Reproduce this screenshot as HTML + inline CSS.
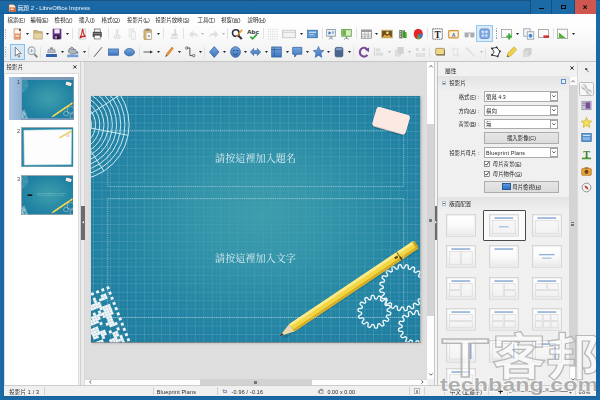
<!DOCTYPE html>
<html><head><meta charset="utf-8"><title>LibreOffice Impress</title>
<style>
html,body{margin:0;padding:0}
body{width:600px;height:400px;overflow:hidden;position:relative;background:#1a68a4;font-family:"Liberation Sans","Noto Sans CJK TC",sans-serif;font-size:5.4px;color:#222}
div,svg{position:absolute;box-sizing:border-box}
.t{opacity:.999;white-space:nowrap;height:10px;line-height:10px;font-size:5.4px;color:#262626;font-weight:400}
u{text-decoration-thickness:0.35px;text-underline-offset:0.4px;text-decoration-color:rgba(30,30,30,.5)}
.r{text-align:right}
svg{overflow:visible}
</style></head><body>
<svg width="0" height="0" style="left:0;top:0"><defs><linearGradient id="icb" x1="0" y1="0" x2="0" y2="1"><stop offset="0" stop-color="#76a6de"/><stop offset="1" stop-color="#3c74bc"/></linearGradient><linearGradient id="ltg" x1="0" y1="0" x2="0" y2="1"><stop offset="0" stop-color="#ffffff"/><stop offset=".5" stop-color="#fbfbfb"/><stop offset="1" stop-color="#ebebeb"/></linearGradient></defs></svg>
<div style="left:0;top:0;width:600px;height:400px">
<div style="left:0px;top:0px;width:600px;height:15px;background:linear-gradient(#124a78 0,#1f69a2 1.5px,#1a68a4 4px,#1867a6 12px,#155a92 14px,#13507f 15px)"></div>
<svg style="left:8px;top:3.5px;" width="8" height="8" viewBox="0 0 8 8" preserveAspectRatio="none"><path d="M1 .5h4.500l2 2v5H1z" fill="#f6f1ea" stroke="#b55a2c" stroke-width=".6"/><rect x="1.600" y="3.400" width="5.400" height="3.800" fill="#e26a2e"/><rect x="2.600" y="4.400" width="3" height="1.600" fill="#f7d3b8"/></svg>
<div class="t" style="left:17.5px;top:2.8px;color:#f4f8fb;font-size:5.85px">無題 2 - LibreOffice Impress</div>
<div style="left:530.4px;top:0px;width:22px;height:14.2px;border-left:0.7px solid #13507f;border-right:0.7px solid #13507f;background:#1b69a5"></div>
<div style="left:552.4px;top:0px;width:22.3px;height:14.2px;border-right:0.7px solid #13507f;background:#1b69a5"></div>
<div style="left:574.7px;top:0px;width:21.4px;height:14.2px;background:#d0574f"></div>
<div style="left:539.2px;top:7.7px;width:4.4px;height:1.4px;background:#0a0a0a"></div>
<div style="left:561.3px;top:4.9px;width:4.6px;height:3.8px;border:1px solid #0a0a0a;border-top-width:1.3px"></div>
<svg style="left:583px;top:4.9px;" width="4.2" height="4.2" viewBox="0 0 4.2 4.2" preserveAspectRatio="none"><path d="M.4.4l3.400 3.400M3.800.4L.4 3.800" stroke="#111" stroke-width="1.100"/></svg>
<div style="left:4px;top:14.5px;width:592px;height:381px;background:#f0f0f0"></div>
<div style="left:4px;top:14.2px;width:592px;height:12px;background:#fefefe"></div>
<div class="t" style="left:7.5px;top:14.8px;">檔案(<u>F</u>)</div>
<div class="t" style="left:30.5px;top:14.8px;">編輯(<u>E</u>)</div>
<div class="t" style="left:54.5px;top:14.8px;">檢視(<u>V</u>)</div>
<div class="t" style="left:79px;top:14.8px;">插入(<u>I</u>)</div>
<div class="t" style="left:101.5px;top:14.8px;">格式(<u>O</u>)</div>
<div class="t" style="left:127px;top:14.8px;">投影片(<u>L</u>)</div>
<div class="t" style="left:155.5px;top:14.8px;">投影片放映(<u>S</u>)</div>
<div class="t" style="left:197.5px;top:14.8px;">工具(<u>T</u>)</div>
<div class="t" style="left:221px;top:14.8px;">視窗(<u>W</u>)</div>
<div class="t" style="left:247.5px;top:14.8px;">說明(<u>H</u>)</div>
<div style="left:4px;top:26px;width:592px;height:36px;background:linear-gradient(#fdfdfd,#f8f8f8 45%,#eeeeee);border-bottom:0.7px solid #c6c6c6"></div>
<div style="left:5.2px;top:28.5px;width:0.8px;height:0.8px;background:#b5b5b5"></div>
<div style="left:5.2px;top:30.3px;width:0.8px;height:0.8px;background:#b5b5b5"></div>
<div style="left:5.2px;top:32.1px;width:0.8px;height:0.8px;background:#b5b5b5"></div>
<div style="left:5.2px;top:33.9px;width:0.8px;height:0.8px;background:#b5b5b5"></div>
<div style="left:5.2px;top:35.7px;width:0.8px;height:0.8px;background:#b5b5b5"></div>
<div style="left:5.2px;top:37.5px;width:0.8px;height:0.8px;background:#b5b5b5"></div>
<div style="left:5.2px;top:47.0px;width:0.8px;height:0.8px;background:#b5b5b5"></div>
<div style="left:5.2px;top:48.8px;width:0.8px;height:0.8px;background:#b5b5b5"></div>
<div style="left:5.2px;top:50.6px;width:0.8px;height:0.8px;background:#b5b5b5"></div>
<div style="left:5.2px;top:52.4px;width:0.8px;height:0.8px;background:#b5b5b5"></div>
<div style="left:5.2px;top:54.2px;width:0.8px;height:0.8px;background:#b5b5b5"></div>
<div style="left:5.2px;top:56.0px;width:0.8px;height:0.8px;background:#b5b5b5"></div>
<div style="left:476.2px;top:25.4px;width:16.4px;height:16.4px;background:#d9eaf9;border:0.6px solid #9ac6ec"></div>
<svg style="left:12.5px;top:27.5px" width="8.5" height="12" viewBox="0 0 12 12" preserveAspectRatio="none"><path d="M1.600 .8h6.400l2.600 2.400v8H1.600z" fill="#fbf7f2" stroke="#b07a5a" stroke-width=".8"/><rect x="2.200" y="5.400" width="7.800" height="5.400" rx=".6" fill="#e88a5c"/><rect x="3.400" y="6.800" width="5.400" height="2.200" fill="#f7d2b6"/><circle cx="9.800" cy="1.800" r="1.300" fill="#5a3018"/></svg>
<svg style="left:32.5px;top:27.5px" width="10.0" height="12" viewBox="0 0 12 12" preserveAspectRatio="none"><path d="M1 2.5h4l1 1.2h5V11H1z" fill="#cdb57f" stroke="#9a8355" stroke-width=".7"/><path d="M1.4 5.5h9.2V10.6H1.4z" fill="#e6d3a4"/></svg>
<svg style="left:52px;top:27.5px" width="10" height="12" viewBox="0 0 12 12" preserveAspectRatio="none"><rect x=".8" y=".8" width="10.4" height="10.4" rx=".8" fill="#5b2b7d"/><rect x="2.8" y="1.2" width="6.4" height="4.2" fill="#eee8f4"/><rect x="3.2" y="7.3" width="5.6" height="3.9" fill="#2b2233"/><rect x="4" y="8" width="1.6" height="2.6" fill="#d8d0e0"/></svg>
<svg style="left:77.5px;top:27.5px" width="8.5" height="12" viewBox="0 0 12 12" preserveAspectRatio="none"><path d="M1.200 .8h9.600v10.400H1.200z" fill="#f4f4f4" stroke="#bdbdbd" stroke-width=".7"/><path d="M2.600 10C4.800 7.400 6 4 6 2.200 6 1.200 7.200 1.200 7.200 2.400 7.200 5 9.200 8 10.600 8.600 8 8 4.800 8.600 2.600 10z" fill="none" stroke="#c8201c" stroke-width="1.400"/></svg>
<svg style="left:92px;top:27.5px" width="10.5" height="12" viewBox="0 0 12 12" preserveAspectRatio="none"><rect x="2.6" y="1" width="6.8" height="3.6" fill="#f4f4f4" stroke="#555" stroke-width=".7"/><rect x=".8" y="3.8" width="10.4" height="5.4" rx="1" fill="#4a4a4a"/><rect x="2.6" y="7.2" width="6.8" height="3.8" fill="#fafafa" stroke="#555" stroke-width=".6"/><rect x="1.8" y="5" width="8.4" height="1" fill="#888"/></svg>
<svg style="left:112.5px;top:27.5px" width="8.5" height="12" viewBox="0 0 12 12" preserveAspectRatio="none"><path d="M4 1l3.200 6.200M8 1L4.800 7.200" stroke="#d2d2d2" stroke-width="1" fill="none"/><circle cx="3.600" cy="9" r="1.700" fill="none" stroke="#d4d4d4" stroke-width="1"/><circle cx="8.400" cy="9" r="1.700" fill="none" stroke="#d4d4d4" stroke-width="1"/></svg>
<svg style="left:127.5px;top:27.5px" width="8.5" height="12" viewBox="0 0 12 12" preserveAspectRatio="none"><rect x="1.500" y="1" width="6" height="7.500" fill="#f3f3f3" stroke="#dadada" stroke-width=".8"/><rect x="4.500" y="3.800" width="6" height="7.400" fill="#f6f6f6" stroke="#dadada" stroke-width=".8"/></svg>
<svg style="left:143px;top:27.5px" width="9.5" height="12" viewBox="0 0 12 12" preserveAspectRatio="none"><rect x="1.200" y="1.600" width="9.600" height="9.800" rx=".8" fill="#d6b878" stroke="#a08348" stroke-width=".7"/><rect x="3.600" y=".6" width="4.800" height="2.400" rx=".6" fill="#8c8c8c"/><rect x="4.400" y="4.800" width="6" height="6.200" fill="#fbfbfb" stroke="#bbb" stroke-width=".4"/><circle cx="7.400" cy="8" r="1.300" fill="#9aa4ae"/></svg>
<svg style="left:169px;top:27.5px" width="10" height="12" viewBox="0 0 12 12" preserveAspectRatio="none"><path d="M6.5 1h2v4.6h1.6V8H2.4L4.2 5.6H6.5z" fill="#d9d9d9"/><rect x="2" y="8.6" width="8.6" height="2.4" fill="#e3e3e3"/></svg>
<svg style="left:187.5px;top:27.5px" width="11.5" height="12" viewBox="0 0 12 12" preserveAspectRatio="none"><path d="M1 6.400L5 2.600v2.200c3.600 0 5.600 1.800 6 4.600C9.600 7.800 8 7.400 5 7.600v2.400z" fill="#e0e0e0"/></svg>
<svg style="left:207.5px;top:27.5px" width="11.5" height="12" viewBox="0 0 12 12" preserveAspectRatio="none"><path d="M11 6.400L7 2.600v2.200c-3.600 0-5.600 1.800-6 4.600C2.400 7.800 4 7.400 7 7.600v2.400z" fill="#e0e0e0"/></svg>
<svg style="left:231px;top:27.5px" width="12" height="12" viewBox="0 0 12 12" preserveAspectRatio="none"><circle cx="4.8" cy="5" r="3.3" fill="#fdfdfd" stroke="#2c2c3c" stroke-width="1.6"/><path d="M7.2 7.6l3.6 3.400" stroke="#2c2c3c" stroke-width="2"/><path d="M10.600 1.200L5.400 7.800 4.400 9.600 6.400 8.600 11.600 2.200z" fill="#e8902c"/></svg>
<svg style="left:247px;top:27.5px" width="12" height="12" viewBox="0 0 12 12" preserveAspectRatio="none"><text x="0" y="6" font-size="6.2" font-weight="bold" fill="#222" font-family="Liberation Sans,sans-serif" textLength="12" lengthAdjust="spacingAndGlyphs">Abc</text><path d="M3.400 8.600l2.200 2.200 4.400-4.600" fill="none" stroke="#3aa53a" stroke-width="1.800"/></svg>
<svg style="left:267px;top:27.5px" width="11" height="12" viewBox="0 0 12 12" preserveAspectRatio="none"><rect x="1.0" y="1.0" width=".8" height=".8" fill="#b9b9b9"/><rect x="1.0" y="3.4" width=".8" height=".8" fill="#b9b9b9"/><rect x="1.0" y="5.8" width=".8" height=".8" fill="#b9b9b9"/><rect x="1.0" y="8.2" width=".8" height=".8" fill="#b9b9b9"/><rect x="1.0" y="10.6" width=".8" height=".8" fill="#b9b9b9"/><rect x="3.4" y="1.0" width=".8" height=".8" fill="#b9b9b9"/><rect x="3.4" y="3.4" width=".8" height=".8" fill="#b9b9b9"/><rect x="3.4" y="5.8" width=".8" height=".8" fill="#b9b9b9"/><rect x="3.4" y="8.2" width=".8" height=".8" fill="#b9b9b9"/><rect x="3.4" y="10.6" width=".8" height=".8" fill="#b9b9b9"/><rect x="5.8" y="1.0" width=".8" height=".8" fill="#b9b9b9"/><rect x="5.8" y="3.4" width=".8" height=".8" fill="#b9b9b9"/><rect x="5.8" y="5.8" width=".8" height=".8" fill="#b9b9b9"/><rect x="5.8" y="8.2" width=".8" height=".8" fill="#b9b9b9"/><rect x="5.8" y="10.6" width=".8" height=".8" fill="#b9b9b9"/><rect x="8.2" y="1.0" width=".8" height=".8" fill="#b9b9b9"/><rect x="8.2" y="3.4" width=".8" height=".8" fill="#b9b9b9"/><rect x="8.2" y="5.8" width=".8" height=".8" fill="#b9b9b9"/><rect x="8.2" y="8.2" width=".8" height=".8" fill="#b9b9b9"/><rect x="8.2" y="10.6" width=".8" height=".8" fill="#b9b9b9"/><rect x="10.6" y="1.0" width=".8" height=".8" fill="#b9b9b9"/><rect x="10.6" y="3.4" width=".8" height=".8" fill="#b9b9b9"/><rect x="10.6" y="5.8" width=".8" height=".8" fill="#b9b9b9"/><rect x="10.6" y="8.2" width=".8" height=".8" fill="#b9b9b9"/><rect x="10.6" y="10.6" width=".8" height=".8" fill="#b9b9b9"/></svg>
<svg style="left:282px;top:27.5px" width="14" height="12" viewBox="0 0 12 12" preserveAspectRatio="none"><rect x=".6" y="2.200" width="10.800" height="7.600" fill="#f3f3f3" stroke="#b8b8b8" stroke-width=".7"/><path d="M.6 4.400h10.800" stroke="#c4c4c4" stroke-width=".6"/></svg>
<svg style="left:307px;top:27.5px" width="11" height="12" viewBox="0 0 12 12" preserveAspectRatio="none"><rect x=".6" y="2.200" width="10.800" height="7.600" fill="#4f8fcd" stroke="#2f6aa6" stroke-width=".7"/><rect x="2" y="3.600" width="8" height="1.300" fill="#cfe2f5"/><rect x="2" y="6" width="6" height="1" fill="#a9cbee"/><rect x="2" y="7.600" width="7" height="1" fill="#8bb6e2"/></svg>
<svg style="left:326px;top:27.5px" width="10" height="12" viewBox="0 0 12 12" preserveAspectRatio="none"><rect x=".8" y="1.600" width="10.400" height="6.600" fill="#eef1f4" stroke="#7a8792" stroke-width=".8"/><path d="M3 3.200l3.600 1.800-3.600 1.800z" fill="#3a74b8"/><rect x="7" y="3.200" width="3" height="2.600" fill="#9db8d8"/><path d="M6 8.200v2.600M3.400 11.400L6 9.600l2.600 1.800" stroke="#7a8792" stroke-width=".9" fill="none"/></svg>
<svg style="left:341px;top:27.5px" width="11" height="12" viewBox="0 0 12 12" preserveAspectRatio="none"><rect x=".8" y="1.600" width="10.400" height="6.600" fill="#d6ecc2" stroke="#5a9a3a" stroke-width=".9"/><rect x="1.400" y="2.200" width="4" height="5.400" fill="#6cb24a"/><path d="M6 8.200v2.600M3.400 11.400L6 9.600l2.600 1.800" stroke="#7a8792" stroke-width=".9" fill="none"/></svg>
<svg style="left:361px;top:27.5px" width="11" height="12" viewBox="0 0 12 12" preserveAspectRatio="none"><rect x=".6" y="2" width="10.800" height="8.200" fill="#fbfbfb" stroke="#7d7d7d" stroke-width=".8"/><rect x=".6" y="2" width="10.800" height="2" fill="#9a9a9a"/><path d="M.6 6.200h10.800M.6 8.200h10.800M4.200 4v6.200M7.800 4v6.200" stroke="#8d8d8d" stroke-width=".6"/></svg>
<svg style="left:381px;top:27.5px" width="12" height="12" viewBox="0 0 12 12" preserveAspectRatio="none"><rect x=".6" y="2.200" width="10.800" height="7.600" fill="#6e4f22" stroke="#cdbd8e" stroke-width="1"/><path d="M1.400 9.200l2.600-2.800 2 1.600 1.800-1.200 2.800 2.400z" fill="#e9a93a"/><circle cx="6.400" cy="4.800" r="1.400" fill="#f7dc6a"/></svg>
<svg style="left:398px;top:27.5px" width="10" height="12" viewBox="0 0 12 12" preserveAspectRatio="none"><rect x="1.400" y="2" width="4" height="8.400" fill="#6f7f6a"/><path d="M5.400 3l5 1.200v6l-5-.6z" fill="#58a83a"/><path d="M7.400 2v8" stroke="#3a8a2a" stroke-width="1.600"/><rect x="2.200" y="3" width="1.200" height="1.200" fill="#dfe8da"/><rect x="2.200" y="5.400" width="1.200" height="1.200" fill="#dfe8da"/><rect x="2.200" y="7.800" width="1.200" height="1.200" fill="#dfe8da"/></svg>
<svg style="left:413px;top:27.5px" width="10.5" height="12" viewBox="0 0 12 12" preserveAspectRatio="none"><circle cx="6" cy="6" r="5.200" fill="#e0282a"/><path d="M6 6L11.200 6A5.200 5.200 0 0 1 8.600 10.500z" fill="#3a78c6"/><path d="M6 6L8.600 10.500A5.200 5.200 0 0 1 4.400 10.950z" fill="#4caf50"/></svg>
<svg style="left:432px;top:27.5px" width="11" height="12" viewBox="0 0 12 12" preserveAspectRatio="none"><rect x=".8" y=".8" width="10.400" height="10.400" fill="#fcfcfc" stroke="#333" stroke-width=".7" stroke-dasharray="1.6 .5"/><text x="6" y="9.600" font-size="10" font-weight="bold" text-anchor="middle" font-family="Liberation Serif,serif" fill="#1a1a1a">T</text></svg>
<svg style="left:448px;top:27.5px" width="11" height="12" viewBox="0 0 12 12" preserveAspectRatio="none"><rect x=".8" y="2.600" width="10.400" height="7.200" rx=".8" fill="#fdf3dc" stroke="#d4902a" stroke-width="1.200"/><text x="6" y="8.600" font-size="5.600" font-weight="bold" text-anchor="middle" font-family="Liberation Sans,sans-serif" fill="#3a66b0">A</text></svg>
<svg style="left:464px;top:27.5px" width="11" height="12" viewBox="0 0 12 12" preserveAspectRatio="none"><path d="M.6 4.400h4.600v3.600c0 1-1 1.600-2.300 1.600S.6 9 .6 8zM6.800 4.400h4.600v3.600c0 1-1 1.600-2.300 1.600S6.800 9 6.800 8z" fill="#a9adb2"/><path d="M5.200 5h1.600" stroke="#8a8e92" stroke-width=".9"/></svg>
<svg style="left:501px;top:27.5px" width="11.5" height="12" viewBox="0 0 12 12" preserveAspectRatio="none"><rect x=".6" y="1.400" width="10.400" height="8" fill="#fbfbfb" stroke="#9a9a9a" stroke-width=".8"/><path d="M8.600 5.600v5.800M5.700 8.500h5.800" stroke="#3fae3a" stroke-width="2.200"/></svg>
<svg style="left:522.5px;top:27.5px" width="11.5" height="12" viewBox="0 0 12 12" preserveAspectRatio="none"><rect x=".8" y=".8" width="6.600" height="7.400" fill="#f4f6f9" stroke="#8d97a3" stroke-width=".8"/><rect x="4.400" y="3.800" width="6.800" height="7.400" fill="#f4f6f9" stroke="#8d97a3" stroke-width=".8"/><circle cx="7.800" cy="7.800" r="2" fill="#4a8ad0"/></svg>
<svg style="left:538px;top:27.5px" width="11.5" height="12" viewBox="0 0 12 12" preserveAspectRatio="none"><rect x=".6" y="1.400" width="10.400" height="8" fill="#fbfbfb" stroke="#9a9a9a" stroke-width=".8"/><rect x="5.600" y="7.400" width="6" height="2.400" fill="#d92a2a"/></svg>
<svg style="left:557px;top:27.5px" width="11" height="12" viewBox="0 0 12 12" preserveAspectRatio="none"><rect x=".6" y="1.200" width="10.800" height="9.400" fill="#fbfbfb" stroke="#9a9a9a" stroke-width=".8"/><path d="M2 10V4.400L9.600 10z" fill="#58b03a"/></svg>
<svg style="left:479.2px;top:28.099999999999998px" width="11.199999999999989" height="11.4" viewBox="0 0 12 12" preserveAspectRatio="none"><rect x="1" y="1" width="10" height="10" rx="1.800" fill="#86aee2" stroke="#5584c8" stroke-width=".9"/><rect x="3" y="3" width="2.200" height="2.200" rx=".5" fill="#dfeaf8"/><rect x="6.800" y="3" width="2.200" height="2.200" rx=".5" fill="#dfeaf8"/><rect x="3" y="6.800" width="2.200" height="2.200" rx=".5" fill="#dfeaf8"/><rect x="6.800" y="6.800" width="2.200" height="2.200" rx=".5" fill="#dfeaf8"/></svg>
<svg style="left:25.5px;top:32.8px" width="3" height="2" viewBox="0 0 3 2"><path d="M0 0h3L1.5 2z" fill="#222"/></svg>
<svg style="left:45.5px;top:32.8px" width="3" height="2" viewBox="0 0 3 2"><path d="M0 0h3L1.5 2z" fill="#222"/></svg>
<svg style="left:66.0px;top:32.8px" width="3" height="2" viewBox="0 0 3 2"><path d="M0 0h3L1.5 2z" fill="#222"/></svg>
<svg style="left:157.0px;top:32.8px" width="3" height="2" viewBox="0 0 3 2"><path d="M0 0h3L1.5 2z" fill="#222"/></svg>
<svg style="left:200.5px;top:32.8px" width="3" height="2" viewBox="0 0 3 2"><path d="M0 0h3L1.5 2z" fill="#b9b9b9"/></svg>
<svg style="left:221.5px;top:32.8px" width="3" height="2" viewBox="0 0 3 2"><path d="M0 0h3L1.5 2z" fill="#b9b9b9"/></svg>
<svg style="left:299.5px;top:32.8px" width="3" height="2" viewBox="0 0 3 2"><path d="M0 0h3L1.5 2z" fill="#222"/></svg>
<svg style="left:374.5px;top:32.8px" width="3" height="2" viewBox="0 0 3 2"><path d="M0 0h3L1.5 2z" fill="#222"/></svg>
<svg style="left:516.0px;top:32.8px" width="3" height="2" viewBox="0 0 3 2"><path d="M0 0h3L1.5 2z" fill="#222"/></svg>
<svg style="left:571.5px;top:32.8px" width="3" height="2" viewBox="0 0 3 2"><path d="M0 0h3L1.5 2z" fill="#222"/></svg>
<div style="left:72.25px;top:28.0px;width:0.6px;height:11px;background:#e2e3e4"></div>
<div style="left:107.75px;top:28.0px;width:0.6px;height:11px;background:#e2e3e4"></div>
<div style="left:162.75px;top:28.0px;width:0.6px;height:11px;background:#e2e3e4"></div>
<div style="left:182.75px;top:28.0px;width:0.6px;height:11px;background:#e2e3e4"></div>
<div style="left:227.25px;top:28.0px;width:0.6px;height:11px;background:#e2e3e4"></div>
<div style="left:262.75px;top:28.0px;width:0.6px;height:11px;background:#e2e3e4"></div>
<div style="left:321.75px;top:28.0px;width:0.6px;height:11px;background:#e2e3e4"></div>
<div style="left:355.75px;top:28.0px;width:0.6px;height:11px;background:#e2e3e4"></div>
<div style="left:427.25px;top:28.0px;width:0.6px;height:11px;background:#e2e3e4"></div>
<div style="left:552.75px;top:28.0px;width:0.6px;height:11px;background:#e2e3e4"></div>
<div style="left:495.8px;top:28.0px;width:0.7px;height:0.9px;background:#999"></div>
<div style="left:495.8px;top:29.7px;width:0.7px;height:0.9px;background:#999"></div>
<div style="left:495.8px;top:31.4px;width:0.7px;height:0.9px;background:#999"></div>
<div style="left:495.8px;top:33.1px;width:0.7px;height:0.9px;background:#999"></div>
<div style="left:495.8px;top:34.8px;width:0.7px;height:0.9px;background:#999"></div>
<div style="left:495.8px;top:36.5px;width:0.7px;height:0.9px;background:#999"></div>
<div style="left:495.8px;top:38.2px;width:0.7px;height:0.9px;background:#999"></div>
<div style="left:9.5px;top:44px;width:15.6px;height:16.4px;background:#d6e8f8;border:0.6px solid #8abde8"></div>
<svg style="left:12px;top:46.0px" width="11" height="12" viewBox="0 0 12 12" preserveAspectRatio="none"><path d="M3.600 1.200v9l2.200-2.200 1.500 3.200 1.300-.6-1.500-3.100h3z" fill="#fdfdfd" stroke="#3a3a3a" stroke-width=".6"/></svg>
<svg style="left:27px;top:46.0px" width="11" height="12" viewBox="0 0 12 12" preserveAspectRatio="none"><circle cx="5" cy="4.800" r="3.900" fill="#e9f0f7" stroke="#a2aab2" stroke-width="1.200"/><path d="M7.900 7.900l3.300 3.300" stroke="#7d848b" stroke-width="2"/><path d="M3.200 4.800h3.600M5 3v3.600" stroke="#9aa2aa" stroke-width=".8"/></svg>
<svg style="left:45px;top:46.0px" width="13" height="12" viewBox="0 0 12 12" preserveAspectRatio="none"><rect x="1" y="8" width="10" height="3" fill="#2f62ae"/><path d="M2.400 6.600h7.200L9 3.400H3z" fill="#b8bcc2" stroke="#80858c" stroke-width=".6"/><rect x="4.600" y="1.400" width="2.800" height="2" fill="#8f959c"/></svg>
<svg style="left:66px;top:46.0px" width="13.5" height="12" viewBox="0 0 12 12" preserveAspectRatio="none"><rect x="1" y="8.600" width="10" height="2.600" fill="#6fa0d8"/><path d="M3 2.400l5.400 1.200 1.200 3.600-4.600 1.200L2 6z" fill="#aeb4bb" stroke="#6f767e" stroke-width=".7"/><path d="M9.600 4.400c1.200 1.200 1.600 2.400 1.200 3.600-.8-.6-1.200-1.800-1.200-3.600z" fill="#3f78c2"/><path d="M4 1.200c2 0 3 1 3.200 2.600" fill="none" stroke="#555" stroke-width=".7"/></svg>
<svg style="left:93px;top:46.0px" width="10" height="12" viewBox="0 0 12 12" preserveAspectRatio="none"><path d="M1.200 10.800L10.800 1.200" stroke="#3c3c3c" stroke-width=".9"/></svg>
<svg style="left:108px;top:46.0px" width="11" height="12" viewBox="0 0 12 12" preserveAspectRatio="none"><rect x=".6" y="3" width="10.800" height="6.200" fill="url(#icb)" stroke="#2f62a2" stroke-width=".8"/></svg>
<svg style="left:124px;top:46.0px" width="11" height="12" viewBox="0 0 12 12" preserveAspectRatio="none"><ellipse cx="6" cy="6.200" rx="5.400" ry="3.700" fill="url(#icb)" stroke="#2f62a2" stroke-width=".8"/></svg>
<svg style="left:142.5px;top:46.0px" width="10.5" height="12" viewBox="0 0 12 12" preserveAspectRatio="none"><path d="M.6 6h8" stroke="#2a2a2a" stroke-width=".8"/><path d="M8 4.400L11.400 6 8 7.600z" fill="#2a2a2a"/></svg>
<svg style="left:164px;top:46.0px" width="10" height="12" viewBox="0 0 12 12" preserveAspectRatio="none"><path d="M9.600 1l1.600 1.600-6.600 6.800L2 10.600l1-2.800z" fill="#e8953a" stroke="#a8641c" stroke-width=".5"/><path d="M2 10.600l.6-1.600 1 1z" fill="#333"/></svg>
<svg style="left:184.5px;top:46.0px" width="10.5" height="12" viewBox="0 0 12 12" preserveAspectRatio="none"><path d="M2 2h3.600v7.600H10" fill="none" stroke="#3a3a3a" stroke-width=".9"/><circle cx="2" cy="2" r="1.300" fill="#fff" stroke="#333" stroke-width=".7"/><circle cx="10" cy="9.600" r="1.300" fill="#fff" stroke="#333" stroke-width=".7"/></svg>
<svg style="left:209px;top:46.0px" width="10.5" height="12" viewBox="0 0 12 12" preserveAspectRatio="none"><path d="M6 .6L11.400 6 6 11.400.6 6z" fill="url(#icb)" stroke="#2c5c98" stroke-width=".8"/></svg>
<svg style="left:229.5px;top:46.0px" width="11.0" height="12" viewBox="0 0 12 12" preserveAspectRatio="none"><circle cx="6" cy="6" r="5.300" fill="url(#icb)" stroke="#2c5c98" stroke-width=".8"/><circle cx="4.200" cy="4.600" r=".8" fill="#1d3f70"/><circle cx="7.800" cy="4.600" r=".8" fill="#1d3f70"/><path d="M3.400 7.400c1.400 1.800 3.800 1.800 5.200 0" fill="none" stroke="#1d3f70" stroke-width=".8"/></svg>
<svg style="left:250px;top:46.0px" width="11" height="12" viewBox="0 0 12 12" preserveAspectRatio="none"><path d="M.4 6L4 2.400v2.200h4V2.400L11.600 6 8 9.600V7.400H4v2.200z" fill="url(#icb)" stroke="#2c5c98" stroke-width=".6"/></svg>
<svg style="left:271px;top:46.0px" width="11" height="12" viewBox="0 0 12 12" preserveAspectRatio="none"><rect x=".8" y="1" width="10.400" height="10" fill="url(#icb)" stroke="#2c5c98" stroke-width=".8"/><path d="M.8 3.600h10.400M3.600 1v10" stroke="#2c5c98" stroke-width=".7"/></svg>
<svg style="left:292px;top:46.0px" width="10.5" height="12" viewBox="0 0 12 12" preserveAspectRatio="none"><path d="M.8 1.400h10.400v6.800H5.600L3 11V8.200H.8z" fill="url(#icb)" stroke="#2c5c98" stroke-width=".8"/></svg>
<svg style="left:312.5px;top:46.0px" width="11.0" height="12" viewBox="0 0 12 12" preserveAspectRatio="none"><path d="M6 .4l1.700 3.800 4.100.4-3.100 2.700.9 4.100L6 9.200 2.400 11.400l.9-4.100L.2 4.600l4.100-.4z" fill="url(#icb)" stroke="#2c5c98" stroke-width=".6"/></svg>
<svg style="left:334px;top:46.0px" width="10" height="12" viewBox="0 0 12 12" preserveAspectRatio="none"><rect x="1.400" y="1.400" width="9.200" height="9.400" rx="1.600" fill="#48668e" stroke="#2c4464" stroke-width=".7"/><rect x="2.200" y="2" width="7.600" height="2.200" rx="1" fill="#7f9cc0"/></svg>
<svg style="left:357.5px;top:46.0px" width="11.5" height="12" viewBox="0 0 12 12" preserveAspectRatio="none"><path d="M9.800 8.800A4.400 4.400 0 1 1 9.400 3" fill="none" stroke="#7a4a9a" stroke-width="2.200"/><path d="M7.200 3.600L11.600 1.400l-.2 4.800z" fill="#7a4a9a"/></svg>
<svg style="left:373px;top:46.0px" width="11" height="12" viewBox="0 0 12 12" preserveAspectRatio="none"><rect x="1" y="1.400" width="1.200" height="9.200" fill="#d8d8d8"/><rect x="3" y="2.400" width="5" height="3" fill="#dcdcdc"/><rect x="3" y="6.600" width="8" height="3" fill="#dcdcdc"/></svg>
<svg style="left:394px;top:46.0px" width="10.5" height="12" viewBox="0 0 12 12" preserveAspectRatio="none"><rect x="1" y="3.600" width="7" height="7" fill="#dedede"/><rect x="4" y="1" width="7" height="7" fill="#d2d2d2"/></svg>
<svg style="left:414.5px;top:46.0px" width="11.0" height="12" viewBox="0 0 12 12" preserveAspectRatio="none"><rect x="1" y="2" width="3" height="3" fill="#dadada"/><rect x="8" y="2" width="3" height="3" fill="#dadada"/><rect x="1" y="7" width="3" height="4" fill="#dedede"/><rect x="4.600" y="7" width="3" height="4" fill="#dedede"/><rect x="8" y="7" width="3" height="4" fill="#dedede"/></svg>
<svg style="left:434.5px;top:46.0px" width="10.5" height="12" viewBox="0 0 12 12" preserveAspectRatio="none"><rect x="1.600" y="3.400" width="9.800" height="6.200" rx=".6" fill="#6a6250"/><rect x=".8" y="2.400" width="9.800" height="6.200" rx=".6" fill="#f0d88a" stroke="#8a7434" stroke-width=".7"/></svg>
<svg style="left:451px;top:46.0px" width="9" height="12" viewBox="0 0 12 12" preserveAspectRatio="none"><path d="M3 .8v8.200h8.200M.8 3h8.200v8.200" fill="none" stroke="#e0e0e0" stroke-width="1.100"/></svg>
<svg style="left:465px;top:46.0px" width="11" height="12" viewBox="0 0 12 12" preserveAspectRatio="none"><path d="M1.400 1.400l9.200 9.200" stroke="#dcdcdc" stroke-width="1.400"/><path d="M2 1l.6 1.400L4 3l-1.400.6L2 5l-.6-1.400L0 3l1.400-.6z" fill="#e0e0e0"/></svg>
<svg style="left:489.5px;top:46.0px" width="11.5" height="12" viewBox="0 0 12 12" preserveAspectRatio="none"><path d="M2 2.400l5-1 3.400 4-2.400 5-6-1.400 2.400-3z" fill="#fdfdfd" stroke="#222" stroke-width=".9"/><rect x="1.200" y="1.600" width="1.600" height="1.600" fill="#222"/><rect x="6.200" y=".6" width="1.600" height="1.600" fill="#222"/><rect x="9.600" y="4.600" width="1.600" height="1.600" fill="#222"/><rect x="7.200" y="9.600" width="1.600" height="1.600" fill="#222"/><rect x="1.200" y="8.200" width="1.600" height="1.600" fill="#222"/></svg>
<svg style="left:506px;top:46.0px" width="11.5" height="12" viewBox="0 0 12 12" preserveAspectRatio="none"><path d="M8.400.8l2.800 2.800-6.400 6.400-3.600 1 .8-3.800z" fill="#f0d24a" stroke="#b89a22" stroke-width=".6"/><path d="M1.200 11l.5-2 1.500 1.500z" fill="#444"/></svg>
<svg style="left:522px;top:46.0px" width="10.5" height="12" viewBox="0 0 12 12" preserveAspectRatio="none"><path d="M1 5h6v6H1z" fill="#dcdcdc"/><path d="M1 5l3-3h7l-4 3zM7 5l4-3v6l-4 3z" fill="#d0d0d0"/></svg>
<svg style="left:60.5px;top:51.3px" width="3" height="2" viewBox="0 0 3 2"><path d="M0 0h3L1.5 2z" fill="#222"/></svg>
<svg style="left:82.5px;top:51.3px" width="3" height="2" viewBox="0 0 3 2"><path d="M0 0h3L1.5 2z" fill="#222"/></svg>
<svg style="left:157.0px;top:51.3px" width="3" height="2" viewBox="0 0 3 2"><path d="M0 0h3L1.5 2z" fill="#222"/></svg>
<svg style="left:178.0px;top:51.3px" width="3" height="2" viewBox="0 0 3 2"><path d="M0 0h3L1.5 2z" fill="#222"/></svg>
<svg style="left:198.5px;top:51.3px" width="3" height="2" viewBox="0 0 3 2"><path d="M0 0h3L1.5 2z" fill="#222"/></svg>
<svg style="left:223.0px;top:51.3px" width="3" height="2" viewBox="0 0 3 2"><path d="M0 0h3L1.5 2z" fill="#222"/></svg>
<svg style="left:244.0px;top:51.3px" width="3" height="2" viewBox="0 0 3 2"><path d="M0 0h3L1.5 2z" fill="#222"/></svg>
<svg style="left:264.5px;top:51.3px" width="3" height="2" viewBox="0 0 3 2"><path d="M0 0h3L1.5 2z" fill="#222"/></svg>
<svg style="left:285.5px;top:51.3px" width="3" height="2" viewBox="0 0 3 2"><path d="M0 0h3L1.5 2z" fill="#222"/></svg>
<svg style="left:306.0px;top:51.3px" width="3" height="2" viewBox="0 0 3 2"><path d="M0 0h3L1.5 2z" fill="#222"/></svg>
<svg style="left:326.5px;top:51.3px" width="3" height="2" viewBox="0 0 3 2"><path d="M0 0h3L1.5 2z" fill="#222"/></svg>
<svg style="left:347.5px;top:51.3px" width="3" height="2" viewBox="0 0 3 2"><path d="M0 0h3L1.5 2z" fill="#222"/></svg>
<svg style="left:387.5px;top:51.3px" width="3" height="2" viewBox="0 0 3 2"><path d="M0 0h3L1.5 2z" fill="#b9b9b9"/></svg>
<svg style="left:408.0px;top:51.3px" width="3" height="2" viewBox="0 0 3 2"><path d="M0 0h3L1.5 2z" fill="#b9b9b9"/></svg>
<svg style="left:479.5px;top:51.3px" width="3" height="2" viewBox="0 0 3 2"><path d="M0 0h3L1.5 2z" fill="#b9b9b9"/></svg>
<div style="left:40.25px;top:46.5px;width:0.6px;height:11px;background:#e2e3e4"></div>
<div style="left:87.75px;top:46.5px;width:0.6px;height:11px;background:#e2e3e4"></div>
<div style="left:138.75px;top:46.5px;width:0.6px;height:11px;background:#e2e3e4"></div>
<div style="left:203.75px;top:46.5px;width:0.6px;height:11px;background:#e2e3e4"></div>
<div style="left:352.75px;top:46.5px;width:0.6px;height:11px;background:#e2e3e4"></div>
<div style="left:429.25px;top:46.5px;width:0.6px;height:11px;background:#e2e3e4"></div>
<div style="left:484.75px;top:46.5px;width:0.6px;height:11px;background:#e2e3e4"></div>
<div style="left:4px;top:62px;width:76px;height:11px;background:#f0f0f0"></div>
<div class="t" style="left:6.5px;top:62.3px;font-size:5.6px">投影片</div>
<svg style="left:72.8px;top:65.2px;" width="3.8" height="3.8" viewBox="0 0 3.8 3.8" preserveAspectRatio="none"><path d="M.3.3l3.200 3.200M3.500.3L.3 3.500" stroke="#222" stroke-width=".9"/></svg>
<div style="left:4.3px;top:72.7px;width:75.2px;height:312.3px;background:#fff;border:0.5px solid #dcdcdc;border-bottom:0"></div>
<div style="left:80px;top:62px;width:5px;height:322.5px;background:#ececec;border-left:0.5px solid #d0d0d0;border-right:0.5px solid #d8d8d8"></div>
<div style="left:81.4px;top:206px;width:3.2px;height:34px;background:#6b6b6b"></div>
<svg style="left:82px;top:221px;" width="2" height="2.4" viewBox="0 0 2 2.4" preserveAspectRatio="none"><path d="M2 0v2.400L.2 1.200z" fill="#fff"/></svg>
<div style="left:9.3px;top:77.2px;width:65.2px;height:43px;background:linear-gradient(90deg,#a9c4e2 0,#93b2d4 18%,#7f9cba 20%,#7b98b6 100%)"></div>
<div style="left:85px;top:62px;width:342px;height:316.5px;background:#dedede"></div>
<div style="left:92.2px;top:97.3px;width:328.79999999999995px;height:246.10000000000002px;background:rgba(0,0,0,.22);filter:blur(1.8px)"></div>
<div style="left:91.39999999999999px;top:341.5px;width:329.4px;height:1.6px;background:rgba(60,60,60,.45);filter:blur(.5px)"></div>
<svg style="left:90.8px;top:95.7px;" width="329.4" height="246.3" viewBox="0 0 330 247.5" preserveAspectRatio="none"><defs><radialGradient id="mg" cx="52%" cy="48%" r="72%"><stop offset="0" stop-color="#3e9dac"/><stop offset="0.25" stop-color="#3495aa"/><stop offset="0.5" stop-color="#288aa4"/><stop offset="0.71" stop-color="#2081a3"/><stop offset="0.9" stop-color="#1f7e9f"/><stop offset="1" stop-color="#1c799d"/></radialGradient><radialGradient id="mh" cx="52%" cy="48%" r="72%"><stop offset="0" stop-color="#3e9dac" stop-opacity="0.85"/><stop offset="0.25" stop-color="#3495aa" stop-opacity="0.6"/><stop offset="0.5" stop-color="#288aa4" stop-opacity="0.3"/><stop offset="0.71" stop-color="#2081a3" stop-opacity="0.08"/><stop offset="0.9" stop-color="#1f7e9f" stop-opacity="0"/><stop offset="1" stop-color="#1c799d" stop-opacity="0"/></radialGradient><pattern id="mp1" width="4.25" height="4.25" patternUnits="userSpaceOnUse" x="2" y="1.2"><path d="M0 0H4.250M0 0V4.250" stroke="#fff" stroke-opacity=".13" stroke-width=".45"/></pattern><pattern id="mp2" width="8.5" height="8.5" patternUnits="userSpaceOnUse" x="2" y="1.2"><path d="M0 0H8.500M0 0V8.500" stroke="#fff" stroke-opacity=".31" stroke-width=".6"/></pattern><clipPath id="mc"><rect width="330.0" height="247.5"/></clipPath></defs><g clip-path="url(#mc)"><rect width="330.0" height="247.5" fill="url(#mg)"/><rect width="330.0" height="247.5" fill="url(#mp1)"/><rect width="330.0" height="247.5" fill="url(#mp2)"/><rect width="330.0" height="247.5" fill="url(#mh)"/><g fill="none" stroke="#d4f3fb" stroke-opacity="0.92" stroke-width="1.0"><circle cx="-17.3" cy="28.9" r="17.7"/><circle cx="-17.3" cy="28.9" r="21.9"/><circle cx="-17.3" cy="28.9" r="26.1"/><circle cx="-17.3" cy="28.9" r="30.3"/><circle cx="-17.3" cy="28.9" r="34.5"/><circle cx="-17.3" cy="28.9" r="38.7"/><circle cx="-17.3" cy="28.9" r="42.9"/><circle cx="-17.3" cy="28.9" r="47.1"/><circle cx="-17.3" cy="28.9" r="51.3"/><circle cx="-17.3" cy="28.9" r="55.5"/><path d="M-2.46 19.26L29.25 -1.33"/><path d="M0.07 32.28L37.18 39.49"/><path d="M-7.66 43.74L12.93 75.45"/></g><g transform="translate(17.8 191) rotate(-21.4)" fill="#f2f6f8"><rect x="-36.40" y="0.00" width="2.85" height="2.85"/><rect x="-30.80" y="0.00" width="2.85" height="2.85"/><rect x="-25.20" y="0.00" width="2.85" height="2.85"/><rect x="-19.60" y="0.00" width="2.85" height="2.85"/><rect x="-14.00" y="0.00" width="2.85" height="2.85"/><rect x="-8.40" y="0.00" width="2.85" height="2.85"/><rect x="-2.80" y="0.00" width="2.85" height="2.85"/><rect x="-33.60" y="5.60" width="2.85" height="2.85"/><rect x="-30.80" y="5.60" width="2.85" height="2.85"/><rect x="-28.00" y="5.60" width="2.85" height="2.85"/><rect x="-19.60" y="5.60" width="2.85" height="2.85"/><rect x="-11.20" y="5.60" width="2.85" height="2.85"/><rect x="-8.40" y="5.60" width="2.85" height="2.85"/><rect x="-2.80" y="5.60" width="2.85" height="2.85"/><rect x="-33.60" y="8.40" width="2.85" height="2.85"/><rect x="-30.80" y="8.40" width="2.85" height="2.85"/><rect x="-28.00" y="8.40" width="2.85" height="2.85"/><rect x="-19.60" y="8.40" width="2.85" height="2.85"/><rect x="-14.00" y="8.40" width="2.85" height="2.85"/><rect x="-11.20" y="8.40" width="2.85" height="2.85"/><rect x="-8.40" y="8.40" width="2.85" height="2.85"/><rect x="-36.40" y="11.20" width="2.85" height="2.85"/><rect x="-33.60" y="11.20" width="2.85" height="2.85"/><rect x="-30.80" y="11.20" width="2.85" height="2.85"/><rect x="-28.00" y="11.20" width="2.85" height="2.85"/><rect x="-25.20" y="11.20" width="2.85" height="2.85"/><rect x="-22.40" y="11.20" width="2.85" height="2.85"/><rect x="-19.60" y="11.20" width="2.85" height="2.85"/><rect x="-16.80" y="11.20" width="2.85" height="2.85"/><rect x="-2.80" y="11.20" width="2.85" height="2.85"/><rect x="-36.40" y="14.00" width="2.85" height="2.85"/><rect x="-33.60" y="14.00" width="2.85" height="2.85"/><rect x="-30.80" y="14.00" width="2.85" height="2.85"/><rect x="-28.00" y="14.00" width="2.85" height="2.85"/><rect x="-25.20" y="14.00" width="2.85" height="2.85"/><rect x="-22.40" y="14.00" width="2.85" height="2.85"/><rect x="-19.60" y="14.00" width="2.85" height="2.85"/><rect x="-16.80" y="14.00" width="2.85" height="2.85"/><rect x="-16.80" y="16.80" width="2.85" height="2.85"/><rect x="-14.00" y="16.80" width="2.85" height="2.85"/><rect x="-11.20" y="16.80" width="2.85" height="2.85"/><rect x="-8.40" y="16.80" width="2.85" height="2.85"/><rect x="-2.80" y="16.80" width="2.85" height="2.85"/><rect x="-25.20" y="19.60" width="2.85" height="2.85"/><rect x="-19.60" y="19.60" width="2.85" height="2.85"/><rect x="-14.00" y="19.60" width="2.85" height="2.85"/><rect x="-11.20" y="19.60" width="2.85" height="2.85"/><rect x="-8.40" y="19.60" width="2.85" height="2.85"/><rect x="-33.60" y="22.40" width="2.85" height="2.85"/><rect x="-28.00" y="22.40" width="2.85" height="2.85"/><rect x="-25.20" y="22.40" width="2.85" height="2.85"/><rect x="-22.40" y="22.40" width="2.85" height="2.85"/><rect x="-19.60" y="22.40" width="2.85" height="2.85"/><rect x="-16.80" y="22.40" width="2.85" height="2.85"/><rect x="-14.00" y="22.40" width="2.85" height="2.85"/><rect x="-11.20" y="22.40" width="2.85" height="2.85"/><rect x="-8.40" y="22.40" width="2.85" height="2.85"/><rect x="-2.80" y="22.40" width="2.85" height="2.85"/><rect x="-36.40" y="25.20" width="2.85" height="2.85"/><rect x="-33.60" y="25.20" width="2.85" height="2.85"/><rect x="-30.80" y="25.20" width="2.85" height="2.85"/><rect x="-28.00" y="25.20" width="2.85" height="2.85"/><rect x="-25.20" y="25.20" width="2.85" height="2.85"/><rect x="-22.40" y="25.20" width="2.85" height="2.85"/><rect x="-16.80" y="25.20" width="2.85" height="2.85"/><rect x="-14.00" y="25.20" width="2.85" height="2.85"/><rect x="-11.20" y="25.20" width="2.85" height="2.85"/><rect x="-8.40" y="25.20" width="2.85" height="2.85"/><rect x="-33.60" y="28.00" width="2.85" height="2.85"/><rect x="-30.80" y="28.00" width="2.85" height="2.85"/><rect x="-28.00" y="28.00" width="2.85" height="2.85"/><rect x="-25.20" y="28.00" width="2.85" height="2.85"/><rect x="-14.00" y="28.00" width="2.85" height="2.85"/><rect x="-11.20" y="28.00" width="2.85" height="2.85"/><rect x="-2.80" y="28.00" width="2.85" height="2.85"/><rect x="-36.40" y="30.80" width="2.85" height="2.85"/><rect x="-22.40" y="30.80" width="2.85" height="2.85"/><rect x="-14.00" y="30.80" width="2.85" height="2.85"/><rect x="-11.20" y="30.80" width="2.85" height="2.85"/><rect x="-36.40" y="33.60" width="2.85" height="2.85"/><rect x="-33.60" y="33.60" width="2.85" height="2.85"/><rect x="-30.80" y="33.60" width="2.85" height="2.85"/><rect x="-28.00" y="33.60" width="2.85" height="2.85"/><rect x="-16.80" y="33.60" width="2.85" height="2.85"/><rect x="-14.00" y="33.60" width="2.85" height="2.85"/><rect x="-11.20" y="33.60" width="2.85" height="2.85"/><rect x="-2.80" y="33.60" width="2.85" height="2.85"/><rect x="-36.40" y="36.40" width="2.85" height="2.85"/><rect x="-33.60" y="36.40" width="2.85" height="2.85"/><rect x="-30.80" y="36.40" width="2.85" height="2.85"/><rect x="-28.00" y="36.40" width="2.85" height="2.85"/><rect x="-14.00" y="36.40" width="2.85" height="2.85"/><rect x="-11.20" y="36.40" width="2.85" height="2.85"/><rect x="-8.40" y="36.40" width="2.85" height="2.85"/><rect x="-33.60" y="39.20" width="2.85" height="2.85"/><rect x="-30.80" y="39.20" width="2.85" height="2.85"/><rect x="-28.00" y="39.20" width="2.85" height="2.85"/><rect x="-25.20" y="39.20" width="2.85" height="2.85"/><rect x="-22.40" y="39.20" width="2.85" height="2.85"/><rect x="-2.80" y="39.20" width="2.85" height="2.85"/><rect x="-33.60" y="42.00" width="2.85" height="2.85"/><rect x="-30.80" y="42.00" width="2.85" height="2.85"/><rect x="-25.20" y="42.00" width="2.85" height="2.85"/><rect x="-22.40" y="42.00" width="2.85" height="2.85"/><rect x="-16.80" y="42.00" width="2.85" height="2.85"/><rect x="-8.40" y="42.00" width="2.85" height="2.85"/><rect x="-25.20" y="44.80" width="2.85" height="2.85"/><rect x="-14.00" y="44.80" width="2.85" height="2.85"/><rect x="-11.20" y="44.80" width="2.85" height="2.85"/><rect x="-2.80" y="44.80" width="2.85" height="2.85"/><rect x="-33.60" y="47.60" width="2.85" height="2.85"/><rect x="-30.80" y="47.60" width="2.85" height="2.85"/><rect x="-28.00" y="47.60" width="2.85" height="2.85"/><rect x="-14.00" y="47.60" width="2.85" height="2.85"/><rect x="-11.20" y="47.60" width="2.85" height="2.85"/><rect x="-30.80" y="50.40" width="2.85" height="2.85"/><rect x="-28.00" y="50.40" width="2.85" height="2.85"/><rect x="-19.60" y="50.40" width="2.85" height="2.85"/><rect x="-16.80" y="50.40" width="2.85" height="2.85"/><rect x="-14.00" y="50.40" width="2.85" height="2.85"/><rect x="-8.40" y="50.40" width="2.85" height="2.85"/><rect x="-2.80" y="50.40" width="2.85" height="2.85"/><rect x="-36.40" y="53.20" width="2.85" height="2.85"/><rect x="-30.80" y="53.20" width="2.85" height="2.85"/><rect x="-28.00" y="53.20" width="2.85" height="2.85"/><rect x="-25.20" y="53.20" width="2.85" height="2.85"/><rect x="-19.60" y="53.20" width="2.85" height="2.85"/><rect x="-16.80" y="53.20" width="2.85" height="2.85"/><rect x="-14.00" y="53.20" width="2.85" height="2.85"/><rect x="-11.20" y="53.20" width="2.85" height="2.85"/><rect x="-8.40" y="53.20" width="2.85" height="2.85"/><rect x="-36.40" y="56.00" width="2.85" height="2.85"/><rect x="-30.80" y="56.00" width="2.85" height="2.85"/><rect x="-25.20" y="56.00" width="2.85" height="2.85"/><rect x="-19.60" y="56.00" width="2.85" height="2.85"/><rect x="-14.00" y="56.00" width="2.85" height="2.85"/><rect x="-8.40" y="56.00" width="2.85" height="2.85"/><rect x="-2.80" y="56.00" width="2.85" height="2.85"/></g><g fill="none" stroke="#f4fbfd" stroke-width="1.3" stroke-linejoin="round"><path d="M333.69 194.74 L334.88 195.30 L335.38 195.82 L335.31 196.27 L335.23 196.72 L335.15 197.17 L335.05 197.61 L334.40 197.93 L333.10 198.04 L331.79 198.11 L331.15 198.32 L331.03 198.69 L330.91 199.06 L330.78 199.42 L330.64 199.78 L331.01 200.35 L331.99 201.21 L332.94 202.12 L333.26 202.76 L333.05 203.17 L332.84 203.57 L332.62 203.97 L332.39 204.37 L331.68 204.46 L330.40 204.17 L329.14 203.83 L328.46 203.84 L328.24 204.15 L328.01 204.46 L327.77 204.76 L327.53 205.06 L327.71 205.72 L328.37 206.84 L329.00 208.00 L329.09 208.71 L328.77 209.03 L328.45 209.35 L328.12 209.66 L327.78 209.97 L327.07 209.84 L325.95 209.17 L324.85 208.45 L324.20 208.25 L323.89 208.48 L323.58 208.70 L323.26 208.92 L322.94 209.13 L322.90 209.81 L323.19 211.08 L323.43 212.37 L323.30 213.08 L322.89 213.29 L322.49 213.49 L322.07 213.69 L321.66 213.87 L321.03 213.53 L320.16 212.54 L319.34 211.53 L318.79 211.13 L318.42 211.25 L318.06 211.37 L317.69 211.47 L317.31 211.57 L317.07 212.21 L316.95 213.51 L316.78 214.81 L316.44 215.45 L315.99 215.52 L315.54 215.59 L315.08 215.64 L314.63 215.69 L314.14 215.17 L313.62 213.97 L313.15 212.75 L312.75 212.20 L312.36 212.20 L311.98 212.20 L311.59 212.18 L311.21 212.16 L310.78 212.70 L310.26 213.89 L309.70 215.08 L309.18 215.58 L308.73 215.51 L308.28 215.43 L307.83 215.35 L307.39 215.25 L307.07 214.60 L306.96 213.30 L306.89 211.99 L306.68 211.35 L306.31 211.23 L305.94 211.11 L305.58 210.98 L305.22 210.84 L304.65 211.21 L303.79 212.19 L302.88 213.14 L302.24 213.46 L301.83 213.25 L301.43 213.04 L301.03 212.82 L300.63 212.59 L300.54 211.88 L300.83 210.60 L301.17 209.34 L301.16 208.66 L300.85 208.44 L300.54 208.21 L300.24 207.97 L299.94 207.73 L299.28 207.91 L298.16 208.57 L297.00 209.20 L296.29 209.29 L295.97 208.97 L295.65 208.65 L295.34 208.32 L295.03 207.98 L295.16 207.27 L295.83 206.15 L296.55 205.05 L296.75 204.40 L296.52 204.09 L296.30 203.78 L296.08 203.46 L295.87 203.14 L295.19 203.10 L293.92 203.39 L292.63 203.63 L291.92 203.50 L291.71 203.09 L291.51 202.69 L291.31 202.27 L291.13 201.86 L291.47 201.23 L292.46 200.36 L293.47 199.54 L293.87 198.99 L293.75 198.62 L293.63 198.26 L293.53 197.89 L293.43 197.51 L292.79 197.27 L291.49 197.15 L290.19 196.98 L289.55 196.64 L289.48 196.19 L289.41 195.74 L289.36 195.28 L289.31 194.83 L289.83 194.34 L291.03 193.82 L292.25 193.35 L292.80 192.95 L292.80 192.56 L292.80 192.18 L292.82 191.79 L292.84 191.41 L292.30 190.98 L291.11 190.46 L289.92 189.90 L289.42 189.38 L289.49 188.93 L289.57 188.48 L289.65 188.03 L289.75 187.59 L290.40 187.27 L291.70 187.16 L293.01 187.09 L293.65 186.88 L293.77 186.51 L293.89 186.14 L294.02 185.78 L294.16 185.42 L293.79 184.85 L292.81 183.99 L291.86 183.08 L291.54 182.44 L291.75 182.03 L291.96 181.63 L292.18 181.23 L292.41 180.83 L293.12 180.74 L294.40 181.03 L295.66 181.37 L296.34 181.36 L296.56 181.05 L296.79 180.74 L297.03 180.44 L297.27 180.14 L297.09 179.48 L296.43 178.36 L295.80 177.20 L295.71 176.49 L296.03 176.17 L296.35 175.85 L296.68 175.54 L297.02 175.23 L297.73 175.36 L298.85 176.03 L299.95 176.75 L300.60 176.95 L300.91 176.72 L301.22 176.50 L301.54 176.28 L301.86 176.07 L301.90 175.39 L301.61 174.12 L301.37 172.83 L301.50 172.12 L301.91 171.91 L302.31 171.71 L302.73 171.51 L303.14 171.33 L303.77 171.67 L304.64 172.66 L305.46 173.67 L306.01 174.07 L306.38 173.95 L306.74 173.83 L307.11 173.73 L307.49 173.63 L307.73 172.99 L307.85 171.69 L308.02 170.39 L308.36 169.75 L308.81 169.68 L309.26 169.61 L309.72 169.56 L310.17 169.51 L310.66 170.03 L311.18 171.23 L311.65 172.45 L312.05 173.00 L312.44 173.00 L312.82 173.00 L313.21 173.02 L313.59 173.04 L314.02 172.50 L314.54 171.31 L315.10 170.12 L315.62 169.62 L316.07 169.69 L316.52 169.77 L316.97 169.85 L317.41 169.95 L317.73 170.60 L317.84 171.90 L317.91 173.21 L318.12 173.85 L318.49 173.97 L318.86 174.09 L319.22 174.22 L319.58 174.36 L320.15 173.99 L321.01 173.01 L321.92 172.06 L322.56 171.74 L322.97 171.95 L323.37 172.16 L323.77 172.38 L324.17 172.61 L324.26 173.32 L323.97 174.60 L323.63 175.86 L323.64 176.54 L323.95 176.76 L324.26 176.99 L324.56 177.23 L324.86 177.47 L325.52 177.29 L326.64 176.63 L327.80 176.00 L328.51 175.91 L328.83 176.23 L329.15 176.55 L329.46 176.88 L329.77 177.22 L329.64 177.93 L328.97 179.05 L328.25 180.15 L328.05 180.80 L328.28 181.11 L328.50 181.42 L328.72 181.74 L328.93 182.06 L329.61 182.10 L330.88 181.81 L332.17 181.57 L332.88 181.70 L333.09 182.11 L333.29 182.51 L333.49 182.93 L333.67 183.34 L333.33 183.97 L332.34 184.84 L331.33 185.66 L330.93 186.21 L331.05 186.58 L331.17 186.94 L331.27 187.31 L331.37 187.69 L332.01 187.93 L333.31 188.05 L334.61 188.22 L335.25 188.56 L335.32 189.01 L335.39 189.46 L335.44 189.92 L335.49 190.37 L334.97 190.86 L333.77 191.38 L332.55 191.85 L332.00 192.25 L332.00 192.64 L332.00 193.02 L331.98 193.41 L331.96 193.79 L332.50 194.22 L333.69 194.74Z"/><path d="M298.60 216.80 L299.83 217.25 L300.37 217.73 L300.34 218.19 L300.30 218.65 L300.24 219.11 L300.17 219.56 L299.53 219.91 L298.23 220.07 L296.93 220.16 L296.30 220.37 L296.19 220.72 L296.08 221.06 L295.95 221.40 L295.82 221.74 L296.19 222.30 L297.14 223.18 L298.06 224.12 L298.34 224.78 L298.11 225.18 L297.87 225.58 L297.62 225.97 L297.36 226.35 L296.64 226.38 L295.39 225.97 L294.18 225.48 L293.52 225.40 L293.27 225.66 L293.02 225.92 L292.76 226.17 L292.50 226.42 L292.58 227.08 L293.07 228.29 L293.48 229.54 L293.45 230.26 L293.07 230.52 L292.68 230.77 L292.28 231.01 L291.88 231.24 L291.22 230.96 L290.28 230.04 L289.40 229.09 L288.84 228.72 L288.50 228.85 L288.16 228.98 L287.82 229.09 L287.47 229.20 L287.26 229.83 L287.17 231.13 L287.01 232.43 L286.66 233.07 L286.21 233.14 L285.75 233.20 L285.29 233.24 L284.83 233.27 L284.35 232.73 L283.90 231.50 L283.52 230.25 L283.18 229.68 L282.82 229.65 L282.46 229.62 L282.10 229.57 L281.74 229.52 L281.27 230.00 L280.63 231.13 L279.92 232.23 L279.33 232.66 L278.89 232.52 L278.45 232.37 L278.02 232.22 L277.59 232.04 L277.39 231.35 L277.52 230.04 L277.72 228.76 L277.66 228.09 L277.35 227.91 L277.04 227.72 L276.73 227.53 L276.44 227.32 L275.81 227.55 L274.73 228.29 L273.62 228.98 L272.91 229.10 L272.56 228.79 L272.23 228.47 L271.91 228.14 L271.60 227.79 L271.72 227.08 L272.41 225.97 L273.15 224.89 L273.38 224.26 L273.17 223.97 L272.98 223.66 L272.79 223.35 L272.61 223.04 L271.94 222.98 L270.66 223.18 L269.35 223.31 L268.66 223.11 L268.48 222.68 L268.33 222.25 L268.18 221.81 L268.04 221.37 L268.47 220.78 L269.57 220.07 L270.70 219.43 L271.18 218.96 L271.13 218.60 L271.08 218.24 L271.05 217.88 L271.02 217.52 L270.45 217.18 L269.20 216.80 L267.97 216.35 L267.43 215.87 L267.46 215.41 L267.50 214.95 L267.56 214.49 L267.63 214.04 L268.27 213.69 L269.57 213.53 L270.87 213.44 L271.50 213.23 L271.61 212.88 L271.72 212.54 L271.85 212.20 L271.98 211.86 L271.61 211.30 L270.66 210.42 L269.74 209.48 L269.46 208.82 L269.69 208.42 L269.93 208.02 L270.18 207.63 L270.44 207.25 L271.16 207.22 L272.41 207.63 L273.62 208.12 L274.28 208.20 L274.53 207.94 L274.78 207.68 L275.04 207.43 L275.30 207.18 L275.22 206.52 L274.73 205.31 L274.32 204.06 L274.35 203.34 L274.73 203.08 L275.12 202.83 L275.52 202.59 L275.92 202.36 L276.58 202.64 L277.52 203.56 L278.40 204.51 L278.96 204.88 L279.30 204.75 L279.64 204.62 L279.98 204.51 L280.33 204.40 L280.54 203.77 L280.63 202.47 L280.79 201.17 L281.14 200.53 L281.59 200.46 L282.05 200.40 L282.51 200.36 L282.97 200.33 L283.45 200.87 L283.90 202.10 L284.28 203.35 L284.62 203.92 L284.98 203.95 L285.34 203.98 L285.70 204.03 L286.06 204.08 L286.53 203.60 L287.17 202.47 L287.88 201.37 L288.47 200.94 L288.91 201.08 L289.35 201.23 L289.78 201.38 L290.21 201.56 L290.41 202.25 L290.28 203.56 L290.08 204.84 L290.14 205.51 L290.45 205.69 L290.76 205.88 L291.07 206.07 L291.36 206.28 L291.99 206.05 L293.07 205.31 L294.18 204.62 L294.89 204.50 L295.24 204.81 L295.57 205.13 L295.89 205.46 L296.20 205.81 L296.08 206.52 L295.39 207.63 L294.65 208.71 L294.42 209.34 L294.63 209.63 L294.82 209.94 L295.01 210.25 L295.19 210.56 L295.86 210.62 L297.14 210.42 L298.45 210.29 L299.14 210.49 L299.32 210.92 L299.47 211.35 L299.62 211.79 L299.76 212.23 L299.33 212.82 L298.23 213.53 L297.10 214.17 L296.62 214.64 L296.67 215.00 L296.72 215.36 L296.75 215.72 L296.78 216.08 L297.35 216.42 L298.60 216.80Z"/><path d="M339.90 235.72 L341.01 236.42 L341.45 237.01 L341.32 237.47 L341.18 237.92 L341.03 238.37 L340.86 238.82 L340.17 239.05 L338.85 238.96 L337.56 238.80 L336.88 238.89 L336.70 239.22 L336.52 239.55 L336.32 239.87 L336.11 240.19 L336.36 240.82 L337.11 241.88 L337.82 243.00 L337.95 243.72 L337.63 244.07 L337.31 244.42 L336.98 244.76 L336.63 245.10 L335.91 245.00 L334.76 244.35 L333.66 243.65 L333.02 243.44 L332.71 243.66 L332.40 243.87 L332.09 244.07 L331.77 244.27 L331.71 244.94 L331.93 246.23 L332.08 247.54 L331.89 248.24 L331.45 248.43 L331.00 248.60 L330.56 248.77 L330.10 248.92 L329.49 248.51 L328.74 247.43 L328.06 246.32 L327.57 245.85 L327.20 245.92 L326.82 245.98 L326.45 246.02 L326.08 246.06 L325.73 246.64 L325.37 247.90 L324.94 249.14 L324.46 249.69 L323.98 249.67 L323.51 249.63 L323.03 249.59 L322.56 249.52 L322.19 248.90 L321.98 247.60 L321.84 246.30 L321.61 245.66 L321.24 245.56 L320.88 245.45 L320.53 245.33 L320.18 245.20 L319.61 245.58 L318.74 246.55 L317.81 247.49 L317.14 247.77 L316.72 247.55 L316.31 247.31 L315.90 247.06 L315.50 246.80 L315.44 246.07 L315.82 244.81 L316.26 243.58 L316.32 242.91 L316.03 242.66 L315.76 242.40 L315.49 242.14 L315.23 241.87 L314.56 241.96 L313.35 242.46 L312.11 242.90 L311.38 242.87 L311.10 242.49 L310.83 242.09 L310.57 241.69 L310.33 241.28 L310.58 240.60 L311.47 239.63 L312.40 238.71 L312.75 238.13 L312.60 237.78 L312.46 237.43 L312.34 237.08 L312.22 236.72 L311.57 236.52 L310.27 236.44 L308.96 236.30 L308.31 235.96 L308.23 235.49 L308.16 235.01 L308.10 234.54 L308.06 234.07 L308.58 233.56 L309.80 233.07 L311.04 232.65 L311.61 232.28 L311.62 231.90 L311.65 231.52 L311.69 231.15 L311.74 230.78 L311.25 230.31 L310.10 229.68 L308.99 228.98 L308.55 228.39 L308.68 227.93 L308.82 227.48 L308.97 227.03 L309.14 226.58 L309.83 226.35 L311.15 226.44 L312.44 226.60 L313.12 226.51 L313.30 226.18 L313.48 225.85 L313.68 225.53 L313.89 225.21 L313.64 224.58 L312.89 223.52 L312.18 222.40 L312.05 221.68 L312.37 221.33 L312.69 220.98 L313.02 220.64 L313.37 220.30 L314.09 220.40 L315.24 221.05 L316.34 221.75 L316.98 221.96 L317.29 221.74 L317.60 221.53 L317.91 221.33 L318.23 221.13 L318.29 220.46 L318.07 219.17 L317.92 217.86 L318.11 217.16 L318.55 216.97 L319.00 216.80 L319.44 216.63 L319.90 216.48 L320.51 216.89 L321.26 217.97 L321.94 219.08 L322.43 219.55 L322.80 219.48 L323.18 219.42 L323.55 219.38 L323.92 219.34 L324.27 218.76 L324.63 217.50 L325.06 216.26 L325.54 215.71 L326.02 215.73 L326.49 215.77 L326.97 215.81 L327.44 215.88 L327.81 216.50 L328.02 217.80 L328.16 219.10 L328.39 219.74 L328.76 219.84 L329.12 219.95 L329.47 220.07 L329.82 220.20 L330.39 219.82 L331.26 218.85 L332.19 217.91 L332.86 217.63 L333.28 217.85 L333.69 218.09 L334.10 218.34 L334.50 218.60 L334.56 219.33 L334.18 220.59 L333.74 221.82 L333.68 222.49 L333.97 222.74 L334.24 223.00 L334.51 223.26 L334.77 223.53 L335.44 223.44 L336.65 222.94 L337.89 222.50 L338.62 222.53 L338.90 222.91 L339.17 223.31 L339.43 223.71 L339.67 224.12 L339.42 224.80 L338.53 225.77 L337.60 226.69 L337.25 227.27 L337.40 227.62 L337.54 227.97 L337.66 228.32 L337.78 228.68 L338.43 228.88 L339.73 228.96 L341.04 229.10 L341.69 229.44 L341.77 229.91 L341.84 230.39 L341.90 230.86 L341.94 231.33 L341.42 231.84 L340.20 232.33 L338.96 232.75 L338.39 233.12 L338.38 233.50 L338.35 233.88 L338.31 234.25 L338.26 234.62 L338.75 235.09 L339.90 235.72Z"/></g><g transform="translate(300.6 25) rotate(16.3)"><rect x="-16.8" y="-9.2" width="34.5" height="20.6" rx="3" fill="#0b3c55" fill-opacity=".3"/><rect x="-17.25" y="-10.2" width="34.5" height="20.4" rx="3" fill="#e4cbc3"/><rect x="-17.25" y="-10.2" width="34.5" height="19.5" rx="3" fill="#fce9e1"/></g><g transform="translate(188.8 241.3) rotate(-33.9)"><path d="M3 5.2L152 6.2 164 6.2 164 -3 3 1z" fill="#0b3c55" fill-opacity=".22"/><path d="M0 0L15 -4.600V4.600z" fill="#ead9a6"/><path d="M0 0L4 -1.200V1.200z" fill="#2a2a2a"/><rect x="15" y="-4.600" width="149.500" height="9.200" fill="#f3d53f"/><rect x="15" y="-4.600" width="149.500" height="2.800" fill="#f9ea8c"/><rect x="15" y="2" width="149.500" height="2.600" fill="#d4ae2a"/><rect x="144" y="-4.600" width="1.100" height="9.200" fill="#8a7420"/><rect x="144" y="1" width="1.300" height="3.600" fill="#3a3018"/><rect x="139.500" y="-1.500" width="3.400" height="2.200" fill="#5a4c1c"/><path d="M163 -4.600l2.600 1.400v6.400l-2.600 1.400z" fill="#c9a526"/></g><g fill="none" stroke="#e2f3f8" stroke-opacity=".82" stroke-width=".6" stroke-dasharray="1.3 .9"><rect x="16.8" y="34.5" width="296.5" height="56.5"/><rect x="16.8" y="103" width="296.5" height="119.5"/></g></g></svg>
<div class="t" style="left:90.8px;top:153.6px;width:329.4px;text-align:center;font-family:'Liberation Serif','Noto Serif CJK TC',serif;font-size:10.1px;color:#dceef4;height:14px;line-height:14px;margin-top:-2px">請按這裡加入題名</div>
<div class="t" style="left:90.8px;top:254.2px;width:329.4px;text-align:center;font-family:'Liberation Serif','Noto Serif CJK TC',serif;font-size:10.1px;color:#dceef4;height:14px;line-height:14px;margin-top:-2px">請按這裡加入文字</div>
<div class="t" style="left:14px;top:77px;font-size:5.6px;width:6px;text-align:right;color:#4a4a4a">1</div>
<div class="t" style="left:14px;top:125.5px;font-size:5.6px;width:6px;text-align:right;color:#4a4a4a">2</div>
<div class="t" style="left:14px;top:173.5px;font-size:5.6px;width:6px;text-align:right;color:#4a4a4a">3</div>
<svg style="left:21.7px;top:79.7px;" width="51.2" height="38.4" viewBox="0 0 330 247.5" preserveAspectRatio="none"><defs><radialGradient id="ag" cx="52%" cy="48%" r="72%"><stop offset="0" stop-color="#3e9dac"/><stop offset="0.25" stop-color="#3495aa"/><stop offset="0.5" stop-color="#288aa4"/><stop offset="0.71" stop-color="#2081a3"/><stop offset="0.9" stop-color="#1f7e9f"/><stop offset="1" stop-color="#1c799d"/></radialGradient><radialGradient id="ah" cx="52%" cy="48%" r="72%"><stop offset="0" stop-color="#3e9dac" stop-opacity="0.85"/><stop offset="0.25" stop-color="#3495aa" stop-opacity="0.6"/><stop offset="0.5" stop-color="#288aa4" stop-opacity="0.3"/><stop offset="0.71" stop-color="#2081a3" stop-opacity="0.08"/><stop offset="0.9" stop-color="#1f7e9f" stop-opacity="0"/><stop offset="1" stop-color="#1c799d" stop-opacity="0"/></radialGradient><pattern id="ap1" width="4.25" height="4.25" patternUnits="userSpaceOnUse" x="2" y="1.2"><path d="M0 0H4.250M0 0V4.250" stroke="#fff" stroke-opacity=".13" stroke-width=".45"/></pattern><pattern id="ap2" width="8.5" height="8.5" patternUnits="userSpaceOnUse" x="2" y="1.2"><path d="M0 0H8.500M0 0V8.500" stroke="#fff" stroke-opacity=".31" stroke-width=".6"/></pattern><clipPath id="ac"><rect width="330.0" height="247.5"/></clipPath></defs><g clip-path="url(#ac)"><rect width="330.0" height="247.5" fill="url(#ag)"/><g fill="none" stroke="#d4f3fb" stroke-opacity="0.35" stroke-width="2.2"><circle cx="-17.3" cy="28.9" r="17.7"/><circle cx="-17.3" cy="28.9" r="21.9"/><circle cx="-17.3" cy="28.9" r="26.1"/><circle cx="-17.3" cy="28.9" r="30.3"/><circle cx="-17.3" cy="28.9" r="34.5"/><circle cx="-17.3" cy="28.9" r="38.7"/><circle cx="-17.3" cy="28.9" r="42.9"/><circle cx="-17.3" cy="28.9" r="47.1"/><circle cx="-17.3" cy="28.9" r="51.3"/><circle cx="-17.3" cy="28.9" r="55.5"/><path d="M-2.46 19.26L29.25 -1.33"/><path d="M0.07 32.28L37.18 39.49"/><path d="M-7.66 43.74L12.93 75.45"/></g><g transform="translate(17.8 191) rotate(-21.4)" fill="#f2f6f8"><rect x="-36.40" y="0.00" width="2.85" height="2.85"/><rect x="-30.80" y="0.00" width="2.85" height="2.85"/><rect x="-25.20" y="0.00" width="2.85" height="2.85"/><rect x="-19.60" y="0.00" width="2.85" height="2.85"/><rect x="-14.00" y="0.00" width="2.85" height="2.85"/><rect x="-8.40" y="0.00" width="2.85" height="2.85"/><rect x="-2.80" y="0.00" width="2.85" height="2.85"/><rect x="-33.60" y="5.60" width="2.85" height="2.85"/><rect x="-30.80" y="5.60" width="2.85" height="2.85"/><rect x="-28.00" y="5.60" width="2.85" height="2.85"/><rect x="-19.60" y="5.60" width="2.85" height="2.85"/><rect x="-11.20" y="5.60" width="2.85" height="2.85"/><rect x="-8.40" y="5.60" width="2.85" height="2.85"/><rect x="-2.80" y="5.60" width="2.85" height="2.85"/><rect x="-33.60" y="8.40" width="2.85" height="2.85"/><rect x="-30.80" y="8.40" width="2.85" height="2.85"/><rect x="-28.00" y="8.40" width="2.85" height="2.85"/><rect x="-19.60" y="8.40" width="2.85" height="2.85"/><rect x="-14.00" y="8.40" width="2.85" height="2.85"/><rect x="-11.20" y="8.40" width="2.85" height="2.85"/><rect x="-8.40" y="8.40" width="2.85" height="2.85"/><rect x="-36.40" y="11.20" width="2.85" height="2.85"/><rect x="-33.60" y="11.20" width="2.85" height="2.85"/><rect x="-30.80" y="11.20" width="2.85" height="2.85"/><rect x="-28.00" y="11.20" width="2.85" height="2.85"/><rect x="-25.20" y="11.20" width="2.85" height="2.85"/><rect x="-22.40" y="11.20" width="2.85" height="2.85"/><rect x="-19.60" y="11.20" width="2.85" height="2.85"/><rect x="-16.80" y="11.20" width="2.85" height="2.85"/><rect x="-2.80" y="11.20" width="2.85" height="2.85"/><rect x="-36.40" y="14.00" width="2.85" height="2.85"/><rect x="-33.60" y="14.00" width="2.85" height="2.85"/><rect x="-30.80" y="14.00" width="2.85" height="2.85"/><rect x="-28.00" y="14.00" width="2.85" height="2.85"/><rect x="-25.20" y="14.00" width="2.85" height="2.85"/><rect x="-22.40" y="14.00" width="2.85" height="2.85"/><rect x="-19.60" y="14.00" width="2.85" height="2.85"/><rect x="-16.80" y="14.00" width="2.85" height="2.85"/><rect x="-16.80" y="16.80" width="2.85" height="2.85"/><rect x="-14.00" y="16.80" width="2.85" height="2.85"/><rect x="-11.20" y="16.80" width="2.85" height="2.85"/><rect x="-8.40" y="16.80" width="2.85" height="2.85"/><rect x="-2.80" y="16.80" width="2.85" height="2.85"/><rect x="-25.20" y="19.60" width="2.85" height="2.85"/><rect x="-19.60" y="19.60" width="2.85" height="2.85"/><rect x="-14.00" y="19.60" width="2.85" height="2.85"/><rect x="-11.20" y="19.60" width="2.85" height="2.85"/><rect x="-8.40" y="19.60" width="2.85" height="2.85"/><rect x="-33.60" y="22.40" width="2.85" height="2.85"/><rect x="-28.00" y="22.40" width="2.85" height="2.85"/><rect x="-25.20" y="22.40" width="2.85" height="2.85"/><rect x="-22.40" y="22.40" width="2.85" height="2.85"/><rect x="-19.60" y="22.40" width="2.85" height="2.85"/><rect x="-16.80" y="22.40" width="2.85" height="2.85"/><rect x="-14.00" y="22.40" width="2.85" height="2.85"/><rect x="-11.20" y="22.40" width="2.85" height="2.85"/><rect x="-8.40" y="22.40" width="2.85" height="2.85"/><rect x="-2.80" y="22.40" width="2.85" height="2.85"/><rect x="-36.40" y="25.20" width="2.85" height="2.85"/><rect x="-33.60" y="25.20" width="2.85" height="2.85"/><rect x="-30.80" y="25.20" width="2.85" height="2.85"/><rect x="-28.00" y="25.20" width="2.85" height="2.85"/><rect x="-25.20" y="25.20" width="2.85" height="2.85"/><rect x="-22.40" y="25.20" width="2.85" height="2.85"/><rect x="-16.80" y="25.20" width="2.85" height="2.85"/><rect x="-14.00" y="25.20" width="2.85" height="2.85"/><rect x="-11.20" y="25.20" width="2.85" height="2.85"/><rect x="-8.40" y="25.20" width="2.85" height="2.85"/><rect x="-33.60" y="28.00" width="2.85" height="2.85"/><rect x="-30.80" y="28.00" width="2.85" height="2.85"/><rect x="-28.00" y="28.00" width="2.85" height="2.85"/><rect x="-25.20" y="28.00" width="2.85" height="2.85"/><rect x="-14.00" y="28.00" width="2.85" height="2.85"/><rect x="-11.20" y="28.00" width="2.85" height="2.85"/><rect x="-2.80" y="28.00" width="2.85" height="2.85"/><rect x="-36.40" y="30.80" width="2.85" height="2.85"/><rect x="-22.40" y="30.80" width="2.85" height="2.85"/><rect x="-14.00" y="30.80" width="2.85" height="2.85"/><rect x="-11.20" y="30.80" width="2.85" height="2.85"/><rect x="-36.40" y="33.60" width="2.85" height="2.85"/><rect x="-33.60" y="33.60" width="2.85" height="2.85"/><rect x="-30.80" y="33.60" width="2.85" height="2.85"/><rect x="-28.00" y="33.60" width="2.85" height="2.85"/><rect x="-16.80" y="33.60" width="2.85" height="2.85"/><rect x="-14.00" y="33.60" width="2.85" height="2.85"/><rect x="-11.20" y="33.60" width="2.85" height="2.85"/><rect x="-2.80" y="33.60" width="2.85" height="2.85"/><rect x="-36.40" y="36.40" width="2.85" height="2.85"/><rect x="-33.60" y="36.40" width="2.85" height="2.85"/><rect x="-30.80" y="36.40" width="2.85" height="2.85"/><rect x="-28.00" y="36.40" width="2.85" height="2.85"/><rect x="-14.00" y="36.40" width="2.85" height="2.85"/><rect x="-11.20" y="36.40" width="2.85" height="2.85"/><rect x="-8.40" y="36.40" width="2.85" height="2.85"/><rect x="-33.60" y="39.20" width="2.85" height="2.85"/><rect x="-30.80" y="39.20" width="2.85" height="2.85"/><rect x="-28.00" y="39.20" width="2.85" height="2.85"/><rect x="-25.20" y="39.20" width="2.85" height="2.85"/><rect x="-22.40" y="39.20" width="2.85" height="2.85"/><rect x="-2.80" y="39.20" width="2.85" height="2.85"/><rect x="-33.60" y="42.00" width="2.85" height="2.85"/><rect x="-30.80" y="42.00" width="2.85" height="2.85"/><rect x="-25.20" y="42.00" width="2.85" height="2.85"/><rect x="-22.40" y="42.00" width="2.85" height="2.85"/><rect x="-16.80" y="42.00" width="2.85" height="2.85"/><rect x="-8.40" y="42.00" width="2.85" height="2.85"/><rect x="-25.20" y="44.80" width="2.85" height="2.85"/><rect x="-14.00" y="44.80" width="2.85" height="2.85"/><rect x="-11.20" y="44.80" width="2.85" height="2.85"/><rect x="-2.80" y="44.80" width="2.85" height="2.85"/><rect x="-33.60" y="47.60" width="2.85" height="2.85"/><rect x="-30.80" y="47.60" width="2.85" height="2.85"/><rect x="-28.00" y="47.60" width="2.85" height="2.85"/><rect x="-14.00" y="47.60" width="2.85" height="2.85"/><rect x="-11.20" y="47.60" width="2.85" height="2.85"/><rect x="-30.80" y="50.40" width="2.85" height="2.85"/><rect x="-28.00" y="50.40" width="2.85" height="2.85"/><rect x="-19.60" y="50.40" width="2.85" height="2.85"/><rect x="-16.80" y="50.40" width="2.85" height="2.85"/><rect x="-14.00" y="50.40" width="2.85" height="2.85"/><rect x="-8.40" y="50.40" width="2.85" height="2.85"/><rect x="-2.80" y="50.40" width="2.85" height="2.85"/><rect x="-36.40" y="53.20" width="2.85" height="2.85"/><rect x="-30.80" y="53.20" width="2.85" height="2.85"/><rect x="-28.00" y="53.20" width="2.85" height="2.85"/><rect x="-25.20" y="53.20" width="2.85" height="2.85"/><rect x="-19.60" y="53.20" width="2.85" height="2.85"/><rect x="-16.80" y="53.20" width="2.85" height="2.85"/><rect x="-14.00" y="53.20" width="2.85" height="2.85"/><rect x="-11.20" y="53.20" width="2.85" height="2.85"/><rect x="-8.40" y="53.20" width="2.85" height="2.85"/><rect x="-36.40" y="56.00" width="2.85" height="2.85"/><rect x="-30.80" y="56.00" width="2.85" height="2.85"/><rect x="-25.20" y="56.00" width="2.85" height="2.85"/><rect x="-19.60" y="56.00" width="2.85" height="2.85"/><rect x="-14.00" y="56.00" width="2.85" height="2.85"/><rect x="-8.40" y="56.00" width="2.85" height="2.85"/><rect x="-2.80" y="56.00" width="2.85" height="2.85"/></g><g fill="none" stroke="#f4fbfd" stroke-width="2.4" stroke-linejoin="round"><path d="M333.69 194.74 L334.88 195.30 L335.38 195.82 L335.31 196.27 L335.23 196.72 L335.15 197.17 L335.05 197.61 L334.40 197.93 L333.10 198.04 L331.79 198.11 L331.15 198.32 L331.03 198.69 L330.91 199.06 L330.78 199.42 L330.64 199.78 L331.01 200.35 L331.99 201.21 L332.94 202.12 L333.26 202.76 L333.05 203.17 L332.84 203.57 L332.62 203.97 L332.39 204.37 L331.68 204.46 L330.40 204.17 L329.14 203.83 L328.46 203.84 L328.24 204.15 L328.01 204.46 L327.77 204.76 L327.53 205.06 L327.71 205.72 L328.37 206.84 L329.00 208.00 L329.09 208.71 L328.77 209.03 L328.45 209.35 L328.12 209.66 L327.78 209.97 L327.07 209.84 L325.95 209.17 L324.85 208.45 L324.20 208.25 L323.89 208.48 L323.58 208.70 L323.26 208.92 L322.94 209.13 L322.90 209.81 L323.19 211.08 L323.43 212.37 L323.30 213.08 L322.89 213.29 L322.49 213.49 L322.07 213.69 L321.66 213.87 L321.03 213.53 L320.16 212.54 L319.34 211.53 L318.79 211.13 L318.42 211.25 L318.06 211.37 L317.69 211.47 L317.31 211.57 L317.07 212.21 L316.95 213.51 L316.78 214.81 L316.44 215.45 L315.99 215.52 L315.54 215.59 L315.08 215.64 L314.63 215.69 L314.14 215.17 L313.62 213.97 L313.15 212.75 L312.75 212.20 L312.36 212.20 L311.98 212.20 L311.59 212.18 L311.21 212.16 L310.78 212.70 L310.26 213.89 L309.70 215.08 L309.18 215.58 L308.73 215.51 L308.28 215.43 L307.83 215.35 L307.39 215.25 L307.07 214.60 L306.96 213.30 L306.89 211.99 L306.68 211.35 L306.31 211.23 L305.94 211.11 L305.58 210.98 L305.22 210.84 L304.65 211.21 L303.79 212.19 L302.88 213.14 L302.24 213.46 L301.83 213.25 L301.43 213.04 L301.03 212.82 L300.63 212.59 L300.54 211.88 L300.83 210.60 L301.17 209.34 L301.16 208.66 L300.85 208.44 L300.54 208.21 L300.24 207.97 L299.94 207.73 L299.28 207.91 L298.16 208.57 L297.00 209.20 L296.29 209.29 L295.97 208.97 L295.65 208.65 L295.34 208.32 L295.03 207.98 L295.16 207.27 L295.83 206.15 L296.55 205.05 L296.75 204.40 L296.52 204.09 L296.30 203.78 L296.08 203.46 L295.87 203.14 L295.19 203.10 L293.92 203.39 L292.63 203.63 L291.92 203.50 L291.71 203.09 L291.51 202.69 L291.31 202.27 L291.13 201.86 L291.47 201.23 L292.46 200.36 L293.47 199.54 L293.87 198.99 L293.75 198.62 L293.63 198.26 L293.53 197.89 L293.43 197.51 L292.79 197.27 L291.49 197.15 L290.19 196.98 L289.55 196.64 L289.48 196.19 L289.41 195.74 L289.36 195.28 L289.31 194.83 L289.83 194.34 L291.03 193.82 L292.25 193.35 L292.80 192.95 L292.80 192.56 L292.80 192.18 L292.82 191.79 L292.84 191.41 L292.30 190.98 L291.11 190.46 L289.92 189.90 L289.42 189.38 L289.49 188.93 L289.57 188.48 L289.65 188.03 L289.75 187.59 L290.40 187.27 L291.70 187.16 L293.01 187.09 L293.65 186.88 L293.77 186.51 L293.89 186.14 L294.02 185.78 L294.16 185.42 L293.79 184.85 L292.81 183.99 L291.86 183.08 L291.54 182.44 L291.75 182.03 L291.96 181.63 L292.18 181.23 L292.41 180.83 L293.12 180.74 L294.40 181.03 L295.66 181.37 L296.34 181.36 L296.56 181.05 L296.79 180.74 L297.03 180.44 L297.27 180.14 L297.09 179.48 L296.43 178.36 L295.80 177.20 L295.71 176.49 L296.03 176.17 L296.35 175.85 L296.68 175.54 L297.02 175.23 L297.73 175.36 L298.85 176.03 L299.95 176.75 L300.60 176.95 L300.91 176.72 L301.22 176.50 L301.54 176.28 L301.86 176.07 L301.90 175.39 L301.61 174.12 L301.37 172.83 L301.50 172.12 L301.91 171.91 L302.31 171.71 L302.73 171.51 L303.14 171.33 L303.77 171.67 L304.64 172.66 L305.46 173.67 L306.01 174.07 L306.38 173.95 L306.74 173.83 L307.11 173.73 L307.49 173.63 L307.73 172.99 L307.85 171.69 L308.02 170.39 L308.36 169.75 L308.81 169.68 L309.26 169.61 L309.72 169.56 L310.17 169.51 L310.66 170.03 L311.18 171.23 L311.65 172.45 L312.05 173.00 L312.44 173.00 L312.82 173.00 L313.21 173.02 L313.59 173.04 L314.02 172.50 L314.54 171.31 L315.10 170.12 L315.62 169.62 L316.07 169.69 L316.52 169.77 L316.97 169.85 L317.41 169.95 L317.73 170.60 L317.84 171.90 L317.91 173.21 L318.12 173.85 L318.49 173.97 L318.86 174.09 L319.22 174.22 L319.58 174.36 L320.15 173.99 L321.01 173.01 L321.92 172.06 L322.56 171.74 L322.97 171.95 L323.37 172.16 L323.77 172.38 L324.17 172.61 L324.26 173.32 L323.97 174.60 L323.63 175.86 L323.64 176.54 L323.95 176.76 L324.26 176.99 L324.56 177.23 L324.86 177.47 L325.52 177.29 L326.64 176.63 L327.80 176.00 L328.51 175.91 L328.83 176.23 L329.15 176.55 L329.46 176.88 L329.77 177.22 L329.64 177.93 L328.97 179.05 L328.25 180.15 L328.05 180.80 L328.28 181.11 L328.50 181.42 L328.72 181.74 L328.93 182.06 L329.61 182.10 L330.88 181.81 L332.17 181.57 L332.88 181.70 L333.09 182.11 L333.29 182.51 L333.49 182.93 L333.67 183.34 L333.33 183.97 L332.34 184.84 L331.33 185.66 L330.93 186.21 L331.05 186.58 L331.17 186.94 L331.27 187.31 L331.37 187.69 L332.01 187.93 L333.31 188.05 L334.61 188.22 L335.25 188.56 L335.32 189.01 L335.39 189.46 L335.44 189.92 L335.49 190.37 L334.97 190.86 L333.77 191.38 L332.55 191.85 L332.00 192.25 L332.00 192.64 L332.00 193.02 L331.98 193.41 L331.96 193.79 L332.50 194.22 L333.69 194.74Z"/><path d="M298.60 216.80 L299.83 217.25 L300.37 217.73 L300.34 218.19 L300.30 218.65 L300.24 219.11 L300.17 219.56 L299.53 219.91 L298.23 220.07 L296.93 220.16 L296.30 220.37 L296.19 220.72 L296.08 221.06 L295.95 221.40 L295.82 221.74 L296.19 222.30 L297.14 223.18 L298.06 224.12 L298.34 224.78 L298.11 225.18 L297.87 225.58 L297.62 225.97 L297.36 226.35 L296.64 226.38 L295.39 225.97 L294.18 225.48 L293.52 225.40 L293.27 225.66 L293.02 225.92 L292.76 226.17 L292.50 226.42 L292.58 227.08 L293.07 228.29 L293.48 229.54 L293.45 230.26 L293.07 230.52 L292.68 230.77 L292.28 231.01 L291.88 231.24 L291.22 230.96 L290.28 230.04 L289.40 229.09 L288.84 228.72 L288.50 228.85 L288.16 228.98 L287.82 229.09 L287.47 229.20 L287.26 229.83 L287.17 231.13 L287.01 232.43 L286.66 233.07 L286.21 233.14 L285.75 233.20 L285.29 233.24 L284.83 233.27 L284.35 232.73 L283.90 231.50 L283.52 230.25 L283.18 229.68 L282.82 229.65 L282.46 229.62 L282.10 229.57 L281.74 229.52 L281.27 230.00 L280.63 231.13 L279.92 232.23 L279.33 232.66 L278.89 232.52 L278.45 232.37 L278.02 232.22 L277.59 232.04 L277.39 231.35 L277.52 230.04 L277.72 228.76 L277.66 228.09 L277.35 227.91 L277.04 227.72 L276.73 227.53 L276.44 227.32 L275.81 227.55 L274.73 228.29 L273.62 228.98 L272.91 229.10 L272.56 228.79 L272.23 228.47 L271.91 228.14 L271.60 227.79 L271.72 227.08 L272.41 225.97 L273.15 224.89 L273.38 224.26 L273.17 223.97 L272.98 223.66 L272.79 223.35 L272.61 223.04 L271.94 222.98 L270.66 223.18 L269.35 223.31 L268.66 223.11 L268.48 222.68 L268.33 222.25 L268.18 221.81 L268.04 221.37 L268.47 220.78 L269.57 220.07 L270.70 219.43 L271.18 218.96 L271.13 218.60 L271.08 218.24 L271.05 217.88 L271.02 217.52 L270.45 217.18 L269.20 216.80 L267.97 216.35 L267.43 215.87 L267.46 215.41 L267.50 214.95 L267.56 214.49 L267.63 214.04 L268.27 213.69 L269.57 213.53 L270.87 213.44 L271.50 213.23 L271.61 212.88 L271.72 212.54 L271.85 212.20 L271.98 211.86 L271.61 211.30 L270.66 210.42 L269.74 209.48 L269.46 208.82 L269.69 208.42 L269.93 208.02 L270.18 207.63 L270.44 207.25 L271.16 207.22 L272.41 207.63 L273.62 208.12 L274.28 208.20 L274.53 207.94 L274.78 207.68 L275.04 207.43 L275.30 207.18 L275.22 206.52 L274.73 205.31 L274.32 204.06 L274.35 203.34 L274.73 203.08 L275.12 202.83 L275.52 202.59 L275.92 202.36 L276.58 202.64 L277.52 203.56 L278.40 204.51 L278.96 204.88 L279.30 204.75 L279.64 204.62 L279.98 204.51 L280.33 204.40 L280.54 203.77 L280.63 202.47 L280.79 201.17 L281.14 200.53 L281.59 200.46 L282.05 200.40 L282.51 200.36 L282.97 200.33 L283.45 200.87 L283.90 202.10 L284.28 203.35 L284.62 203.92 L284.98 203.95 L285.34 203.98 L285.70 204.03 L286.06 204.08 L286.53 203.60 L287.17 202.47 L287.88 201.37 L288.47 200.94 L288.91 201.08 L289.35 201.23 L289.78 201.38 L290.21 201.56 L290.41 202.25 L290.28 203.56 L290.08 204.84 L290.14 205.51 L290.45 205.69 L290.76 205.88 L291.07 206.07 L291.36 206.28 L291.99 206.05 L293.07 205.31 L294.18 204.62 L294.89 204.50 L295.24 204.81 L295.57 205.13 L295.89 205.46 L296.20 205.81 L296.08 206.52 L295.39 207.63 L294.65 208.71 L294.42 209.34 L294.63 209.63 L294.82 209.94 L295.01 210.25 L295.19 210.56 L295.86 210.62 L297.14 210.42 L298.45 210.29 L299.14 210.49 L299.32 210.92 L299.47 211.35 L299.62 211.79 L299.76 212.23 L299.33 212.82 L298.23 213.53 L297.10 214.17 L296.62 214.64 L296.67 215.00 L296.72 215.36 L296.75 215.72 L296.78 216.08 L297.35 216.42 L298.60 216.80Z"/><path d="M339.90 235.72 L341.01 236.42 L341.45 237.01 L341.32 237.47 L341.18 237.92 L341.03 238.37 L340.86 238.82 L340.17 239.05 L338.85 238.96 L337.56 238.80 L336.88 238.89 L336.70 239.22 L336.52 239.55 L336.32 239.87 L336.11 240.19 L336.36 240.82 L337.11 241.88 L337.82 243.00 L337.95 243.72 L337.63 244.07 L337.31 244.42 L336.98 244.76 L336.63 245.10 L335.91 245.00 L334.76 244.35 L333.66 243.65 L333.02 243.44 L332.71 243.66 L332.40 243.87 L332.09 244.07 L331.77 244.27 L331.71 244.94 L331.93 246.23 L332.08 247.54 L331.89 248.24 L331.45 248.43 L331.00 248.60 L330.56 248.77 L330.10 248.92 L329.49 248.51 L328.74 247.43 L328.06 246.32 L327.57 245.85 L327.20 245.92 L326.82 245.98 L326.45 246.02 L326.08 246.06 L325.73 246.64 L325.37 247.90 L324.94 249.14 L324.46 249.69 L323.98 249.67 L323.51 249.63 L323.03 249.59 L322.56 249.52 L322.19 248.90 L321.98 247.60 L321.84 246.30 L321.61 245.66 L321.24 245.56 L320.88 245.45 L320.53 245.33 L320.18 245.20 L319.61 245.58 L318.74 246.55 L317.81 247.49 L317.14 247.77 L316.72 247.55 L316.31 247.31 L315.90 247.06 L315.50 246.80 L315.44 246.07 L315.82 244.81 L316.26 243.58 L316.32 242.91 L316.03 242.66 L315.76 242.40 L315.49 242.14 L315.23 241.87 L314.56 241.96 L313.35 242.46 L312.11 242.90 L311.38 242.87 L311.10 242.49 L310.83 242.09 L310.57 241.69 L310.33 241.28 L310.58 240.60 L311.47 239.63 L312.40 238.71 L312.75 238.13 L312.60 237.78 L312.46 237.43 L312.34 237.08 L312.22 236.72 L311.57 236.52 L310.27 236.44 L308.96 236.30 L308.31 235.96 L308.23 235.49 L308.16 235.01 L308.10 234.54 L308.06 234.07 L308.58 233.56 L309.80 233.07 L311.04 232.65 L311.61 232.28 L311.62 231.90 L311.65 231.52 L311.69 231.15 L311.74 230.78 L311.25 230.31 L310.10 229.68 L308.99 228.98 L308.55 228.39 L308.68 227.93 L308.82 227.48 L308.97 227.03 L309.14 226.58 L309.83 226.35 L311.15 226.44 L312.44 226.60 L313.12 226.51 L313.30 226.18 L313.48 225.85 L313.68 225.53 L313.89 225.21 L313.64 224.58 L312.89 223.52 L312.18 222.40 L312.05 221.68 L312.37 221.33 L312.69 220.98 L313.02 220.64 L313.37 220.30 L314.09 220.40 L315.24 221.05 L316.34 221.75 L316.98 221.96 L317.29 221.74 L317.60 221.53 L317.91 221.33 L318.23 221.13 L318.29 220.46 L318.07 219.17 L317.92 217.86 L318.11 217.16 L318.55 216.97 L319.00 216.80 L319.44 216.63 L319.90 216.48 L320.51 216.89 L321.26 217.97 L321.94 219.08 L322.43 219.55 L322.80 219.48 L323.18 219.42 L323.55 219.38 L323.92 219.34 L324.27 218.76 L324.63 217.50 L325.06 216.26 L325.54 215.71 L326.02 215.73 L326.49 215.77 L326.97 215.81 L327.44 215.88 L327.81 216.50 L328.02 217.80 L328.16 219.10 L328.39 219.74 L328.76 219.84 L329.12 219.95 L329.47 220.07 L329.82 220.20 L330.39 219.82 L331.26 218.85 L332.19 217.91 L332.86 217.63 L333.28 217.85 L333.69 218.09 L334.10 218.34 L334.50 218.60 L334.56 219.33 L334.18 220.59 L333.74 221.82 L333.68 222.49 L333.97 222.74 L334.24 223.00 L334.51 223.26 L334.77 223.53 L335.44 223.44 L336.65 222.94 L337.89 222.50 L338.62 222.53 L338.90 222.91 L339.17 223.31 L339.43 223.71 L339.67 224.12 L339.42 224.80 L338.53 225.77 L337.60 226.69 L337.25 227.27 L337.40 227.62 L337.54 227.97 L337.66 228.32 L337.78 228.68 L338.43 228.88 L339.73 228.96 L341.04 229.10 L341.69 229.44 L341.77 229.91 L341.84 230.39 L341.90 230.86 L341.94 231.33 L341.42 231.84 L340.20 232.33 L338.96 232.75 L338.39 233.12 L338.38 233.50 L338.35 233.88 L338.31 234.25 L338.26 234.62 L338.75 235.09 L339.90 235.72Z"/></g><g transform="translate(300.6 25) rotate(16.3)"><rect x="-16.8" y="-9.2" width="34.5" height="20.6" rx="3" fill="#0b3c55" fill-opacity=".3"/><rect x="-17.25" y="-10.2" width="34.5" height="20.4" rx="3" fill="#e4cbc3"/><rect x="-17.25" y="-10.2" width="34.5" height="19.5" rx="3" fill="#fce9e1"/></g><g transform="translate(188.8 241.3) rotate(-33.9)"><path d="M3 5.2L152 6.2 164 6.2 164 -3 3 1z" fill="#0b3c55" fill-opacity=".22"/><path d="M0 0L15 -4.600V4.600z" fill="#ead9a6"/><path d="M0 0L4 -1.200V1.200z" fill="#2a2a2a"/><rect x="15" y="-4.600" width="149.500" height="9.200" fill="#f3d53f"/><rect x="15" y="-4.600" width="149.500" height="2.800" fill="#f9ea8c"/><rect x="15" y="2" width="149.500" height="2.600" fill="#d4ae2a"/><rect x="144" y="-4.600" width="1.100" height="9.200" fill="#8a7420"/><rect x="144" y="1" width="1.300" height="3.600" fill="#3a3018"/><rect x="139.500" y="-1.500" width="3.400" height="2.200" fill="#5a4c1c"/><path d="M163 -4.600l2.600 1.400v6.400l-2.600 1.400z" fill="#c9a526"/></g></g></svg>
<div style="left:21.099999999999998px;top:127.3px;width:52.400000000000006px;height:39.6px;background:#9aa8b0"></div>
<svg style="left:21.7px;top:127.9px;" width="51.2" height="38.4" viewBox="0 0 330 247.5" preserveAspectRatio="none"><rect width="330" height="247.500" fill="#2a86a4"/><path d="M12 15L320 10 317 235 15 238z" fill="#fdfdfd"/><path d="M12 15L320 10 317 235 15 238z" fill="none" stroke="#bfe0ea" stroke-width="4"/><path d="M236 62L318 14 322 24 246 66z" fill="#e6cf52"/><circle cx="296" cy="48" r="12" fill="#f4d8dc"/></svg>
<div style="left:21.099999999999998px;top:175.3px;width:52.400000000000006px;height:39.6px;background:#9aa8b0"></div>
<svg style="left:21.7px;top:175.9px;" width="51.2" height="38.4" viewBox="0 0 330 247.5" preserveAspectRatio="none"><defs><radialGradient id="bg" cx="52%" cy="48%" r="72%"><stop offset="0" stop-color="#3e9dac"/><stop offset="0.25" stop-color="#3495aa"/><stop offset="0.5" stop-color="#288aa4"/><stop offset="0.71" stop-color="#2081a3"/><stop offset="0.9" stop-color="#1f7e9f"/><stop offset="1" stop-color="#1c799d"/></radialGradient><radialGradient id="bh" cx="52%" cy="48%" r="72%"><stop offset="0" stop-color="#3e9dac" stop-opacity="0.85"/><stop offset="0.25" stop-color="#3495aa" stop-opacity="0.6"/><stop offset="0.5" stop-color="#288aa4" stop-opacity="0.3"/><stop offset="0.71" stop-color="#2081a3" stop-opacity="0.08"/><stop offset="0.9" stop-color="#1f7e9f" stop-opacity="0"/><stop offset="1" stop-color="#1c799d" stop-opacity="0"/></radialGradient><pattern id="bp1" width="4.25" height="4.25" patternUnits="userSpaceOnUse" x="2" y="1.2"><path d="M0 0H4.250M0 0V4.250" stroke="#fff" stroke-opacity=".13" stroke-width=".45"/></pattern><pattern id="bp2" width="8.5" height="8.5" patternUnits="userSpaceOnUse" x="2" y="1.2"><path d="M0 0H8.500M0 0V8.500" stroke="#fff" stroke-opacity=".31" stroke-width=".6"/></pattern><clipPath id="bc"><rect width="330.0" height="247.5"/></clipPath></defs><g clip-path="url(#bc)"><rect width="330.0" height="247.5" fill="url(#bg)"/><g fill="none" stroke="#d4f3fb" stroke-opacity="0.35" stroke-width="2.2"><circle cx="-17.3" cy="28.9" r="17.7"/><circle cx="-17.3" cy="28.9" r="21.9"/><circle cx="-17.3" cy="28.9" r="26.1"/><circle cx="-17.3" cy="28.9" r="30.3"/><circle cx="-17.3" cy="28.9" r="34.5"/><circle cx="-17.3" cy="28.9" r="38.7"/><circle cx="-17.3" cy="28.9" r="42.9"/><circle cx="-17.3" cy="28.9" r="47.1"/><circle cx="-17.3" cy="28.9" r="51.3"/><circle cx="-17.3" cy="28.9" r="55.5"/><path d="M-2.46 19.26L29.25 -1.33"/><path d="M0.07 32.28L37.18 39.49"/><path d="M-7.66 43.74L12.93 75.45"/></g><g transform="translate(17.8 191) rotate(-21.4)" fill="#f2f6f8"><rect x="-36.40" y="0.00" width="2.85" height="2.85"/><rect x="-30.80" y="0.00" width="2.85" height="2.85"/><rect x="-25.20" y="0.00" width="2.85" height="2.85"/><rect x="-19.60" y="0.00" width="2.85" height="2.85"/><rect x="-14.00" y="0.00" width="2.85" height="2.85"/><rect x="-8.40" y="0.00" width="2.85" height="2.85"/><rect x="-2.80" y="0.00" width="2.85" height="2.85"/><rect x="-33.60" y="5.60" width="2.85" height="2.85"/><rect x="-30.80" y="5.60" width="2.85" height="2.85"/><rect x="-28.00" y="5.60" width="2.85" height="2.85"/><rect x="-19.60" y="5.60" width="2.85" height="2.85"/><rect x="-11.20" y="5.60" width="2.85" height="2.85"/><rect x="-8.40" y="5.60" width="2.85" height="2.85"/><rect x="-2.80" y="5.60" width="2.85" height="2.85"/><rect x="-33.60" y="8.40" width="2.85" height="2.85"/><rect x="-30.80" y="8.40" width="2.85" height="2.85"/><rect x="-28.00" y="8.40" width="2.85" height="2.85"/><rect x="-19.60" y="8.40" width="2.85" height="2.85"/><rect x="-14.00" y="8.40" width="2.85" height="2.85"/><rect x="-11.20" y="8.40" width="2.85" height="2.85"/><rect x="-8.40" y="8.40" width="2.85" height="2.85"/><rect x="-36.40" y="11.20" width="2.85" height="2.85"/><rect x="-33.60" y="11.20" width="2.85" height="2.85"/><rect x="-30.80" y="11.20" width="2.85" height="2.85"/><rect x="-28.00" y="11.20" width="2.85" height="2.85"/><rect x="-25.20" y="11.20" width="2.85" height="2.85"/><rect x="-22.40" y="11.20" width="2.85" height="2.85"/><rect x="-19.60" y="11.20" width="2.85" height="2.85"/><rect x="-16.80" y="11.20" width="2.85" height="2.85"/><rect x="-2.80" y="11.20" width="2.85" height="2.85"/><rect x="-36.40" y="14.00" width="2.85" height="2.85"/><rect x="-33.60" y="14.00" width="2.85" height="2.85"/><rect x="-30.80" y="14.00" width="2.85" height="2.85"/><rect x="-28.00" y="14.00" width="2.85" height="2.85"/><rect x="-25.20" y="14.00" width="2.85" height="2.85"/><rect x="-22.40" y="14.00" width="2.85" height="2.85"/><rect x="-19.60" y="14.00" width="2.85" height="2.85"/><rect x="-16.80" y="14.00" width="2.85" height="2.85"/><rect x="-16.80" y="16.80" width="2.85" height="2.85"/><rect x="-14.00" y="16.80" width="2.85" height="2.85"/><rect x="-11.20" y="16.80" width="2.85" height="2.85"/><rect x="-8.40" y="16.80" width="2.85" height="2.85"/><rect x="-2.80" y="16.80" width="2.85" height="2.85"/><rect x="-25.20" y="19.60" width="2.85" height="2.85"/><rect x="-19.60" y="19.60" width="2.85" height="2.85"/><rect x="-14.00" y="19.60" width="2.85" height="2.85"/><rect x="-11.20" y="19.60" width="2.85" height="2.85"/><rect x="-8.40" y="19.60" width="2.85" height="2.85"/><rect x="-33.60" y="22.40" width="2.85" height="2.85"/><rect x="-28.00" y="22.40" width="2.85" height="2.85"/><rect x="-25.20" y="22.40" width="2.85" height="2.85"/><rect x="-22.40" y="22.40" width="2.85" height="2.85"/><rect x="-19.60" y="22.40" width="2.85" height="2.85"/><rect x="-16.80" y="22.40" width="2.85" height="2.85"/><rect x="-14.00" y="22.40" width="2.85" height="2.85"/><rect x="-11.20" y="22.40" width="2.85" height="2.85"/><rect x="-8.40" y="22.40" width="2.85" height="2.85"/><rect x="-2.80" y="22.40" width="2.85" height="2.85"/><rect x="-36.40" y="25.20" width="2.85" height="2.85"/><rect x="-33.60" y="25.20" width="2.85" height="2.85"/><rect x="-30.80" y="25.20" width="2.85" height="2.85"/><rect x="-28.00" y="25.20" width="2.85" height="2.85"/><rect x="-25.20" y="25.20" width="2.85" height="2.85"/><rect x="-22.40" y="25.20" width="2.85" height="2.85"/><rect x="-16.80" y="25.20" width="2.85" height="2.85"/><rect x="-14.00" y="25.20" width="2.85" height="2.85"/><rect x="-11.20" y="25.20" width="2.85" height="2.85"/><rect x="-8.40" y="25.20" width="2.85" height="2.85"/><rect x="-33.60" y="28.00" width="2.85" height="2.85"/><rect x="-30.80" y="28.00" width="2.85" height="2.85"/><rect x="-28.00" y="28.00" width="2.85" height="2.85"/><rect x="-25.20" y="28.00" width="2.85" height="2.85"/><rect x="-14.00" y="28.00" width="2.85" height="2.85"/><rect x="-11.20" y="28.00" width="2.85" height="2.85"/><rect x="-2.80" y="28.00" width="2.85" height="2.85"/><rect x="-36.40" y="30.80" width="2.85" height="2.85"/><rect x="-22.40" y="30.80" width="2.85" height="2.85"/><rect x="-14.00" y="30.80" width="2.85" height="2.85"/><rect x="-11.20" y="30.80" width="2.85" height="2.85"/><rect x="-36.40" y="33.60" width="2.85" height="2.85"/><rect x="-33.60" y="33.60" width="2.85" height="2.85"/><rect x="-30.80" y="33.60" width="2.85" height="2.85"/><rect x="-28.00" y="33.60" width="2.85" height="2.85"/><rect x="-16.80" y="33.60" width="2.85" height="2.85"/><rect x="-14.00" y="33.60" width="2.85" height="2.85"/><rect x="-11.20" y="33.60" width="2.85" height="2.85"/><rect x="-2.80" y="33.60" width="2.85" height="2.85"/><rect x="-36.40" y="36.40" width="2.85" height="2.85"/><rect x="-33.60" y="36.40" width="2.85" height="2.85"/><rect x="-30.80" y="36.40" width="2.85" height="2.85"/><rect x="-28.00" y="36.40" width="2.85" height="2.85"/><rect x="-14.00" y="36.40" width="2.85" height="2.85"/><rect x="-11.20" y="36.40" width="2.85" height="2.85"/><rect x="-8.40" y="36.40" width="2.85" height="2.85"/><rect x="-33.60" y="39.20" width="2.85" height="2.85"/><rect x="-30.80" y="39.20" width="2.85" height="2.85"/><rect x="-28.00" y="39.20" width="2.85" height="2.85"/><rect x="-25.20" y="39.20" width="2.85" height="2.85"/><rect x="-22.40" y="39.20" width="2.85" height="2.85"/><rect x="-2.80" y="39.20" width="2.85" height="2.85"/><rect x="-33.60" y="42.00" width="2.85" height="2.85"/><rect x="-30.80" y="42.00" width="2.85" height="2.85"/><rect x="-25.20" y="42.00" width="2.85" height="2.85"/><rect x="-22.40" y="42.00" width="2.85" height="2.85"/><rect x="-16.80" y="42.00" width="2.85" height="2.85"/><rect x="-8.40" y="42.00" width="2.85" height="2.85"/><rect x="-25.20" y="44.80" width="2.85" height="2.85"/><rect x="-14.00" y="44.80" width="2.85" height="2.85"/><rect x="-11.20" y="44.80" width="2.85" height="2.85"/><rect x="-2.80" y="44.80" width="2.85" height="2.85"/><rect x="-33.60" y="47.60" width="2.85" height="2.85"/><rect x="-30.80" y="47.60" width="2.85" height="2.85"/><rect x="-28.00" y="47.60" width="2.85" height="2.85"/><rect x="-14.00" y="47.60" width="2.85" height="2.85"/><rect x="-11.20" y="47.60" width="2.85" height="2.85"/><rect x="-30.80" y="50.40" width="2.85" height="2.85"/><rect x="-28.00" y="50.40" width="2.85" height="2.85"/><rect x="-19.60" y="50.40" width="2.85" height="2.85"/><rect x="-16.80" y="50.40" width="2.85" height="2.85"/><rect x="-14.00" y="50.40" width="2.85" height="2.85"/><rect x="-8.40" y="50.40" width="2.85" height="2.85"/><rect x="-2.80" y="50.40" width="2.85" height="2.85"/><rect x="-36.40" y="53.20" width="2.85" height="2.85"/><rect x="-30.80" y="53.20" width="2.85" height="2.85"/><rect x="-28.00" y="53.20" width="2.85" height="2.85"/><rect x="-25.20" y="53.20" width="2.85" height="2.85"/><rect x="-19.60" y="53.20" width="2.85" height="2.85"/><rect x="-16.80" y="53.20" width="2.85" height="2.85"/><rect x="-14.00" y="53.20" width="2.85" height="2.85"/><rect x="-11.20" y="53.20" width="2.85" height="2.85"/><rect x="-8.40" y="53.20" width="2.85" height="2.85"/><rect x="-36.40" y="56.00" width="2.85" height="2.85"/><rect x="-30.80" y="56.00" width="2.85" height="2.85"/><rect x="-25.20" y="56.00" width="2.85" height="2.85"/><rect x="-19.60" y="56.00" width="2.85" height="2.85"/><rect x="-14.00" y="56.00" width="2.85" height="2.85"/><rect x="-8.40" y="56.00" width="2.85" height="2.85"/><rect x="-2.80" y="56.00" width="2.85" height="2.85"/></g><g fill="none" stroke="#f4fbfd" stroke-width="2.4" stroke-linejoin="round"><path d="M333.69 194.74 L334.88 195.30 L335.38 195.82 L335.31 196.27 L335.23 196.72 L335.15 197.17 L335.05 197.61 L334.40 197.93 L333.10 198.04 L331.79 198.11 L331.15 198.32 L331.03 198.69 L330.91 199.06 L330.78 199.42 L330.64 199.78 L331.01 200.35 L331.99 201.21 L332.94 202.12 L333.26 202.76 L333.05 203.17 L332.84 203.57 L332.62 203.97 L332.39 204.37 L331.68 204.46 L330.40 204.17 L329.14 203.83 L328.46 203.84 L328.24 204.15 L328.01 204.46 L327.77 204.76 L327.53 205.06 L327.71 205.72 L328.37 206.84 L329.00 208.00 L329.09 208.71 L328.77 209.03 L328.45 209.35 L328.12 209.66 L327.78 209.97 L327.07 209.84 L325.95 209.17 L324.85 208.45 L324.20 208.25 L323.89 208.48 L323.58 208.70 L323.26 208.92 L322.94 209.13 L322.90 209.81 L323.19 211.08 L323.43 212.37 L323.30 213.08 L322.89 213.29 L322.49 213.49 L322.07 213.69 L321.66 213.87 L321.03 213.53 L320.16 212.54 L319.34 211.53 L318.79 211.13 L318.42 211.25 L318.06 211.37 L317.69 211.47 L317.31 211.57 L317.07 212.21 L316.95 213.51 L316.78 214.81 L316.44 215.45 L315.99 215.52 L315.54 215.59 L315.08 215.64 L314.63 215.69 L314.14 215.17 L313.62 213.97 L313.15 212.75 L312.75 212.20 L312.36 212.20 L311.98 212.20 L311.59 212.18 L311.21 212.16 L310.78 212.70 L310.26 213.89 L309.70 215.08 L309.18 215.58 L308.73 215.51 L308.28 215.43 L307.83 215.35 L307.39 215.25 L307.07 214.60 L306.96 213.30 L306.89 211.99 L306.68 211.35 L306.31 211.23 L305.94 211.11 L305.58 210.98 L305.22 210.84 L304.65 211.21 L303.79 212.19 L302.88 213.14 L302.24 213.46 L301.83 213.25 L301.43 213.04 L301.03 212.82 L300.63 212.59 L300.54 211.88 L300.83 210.60 L301.17 209.34 L301.16 208.66 L300.85 208.44 L300.54 208.21 L300.24 207.97 L299.94 207.73 L299.28 207.91 L298.16 208.57 L297.00 209.20 L296.29 209.29 L295.97 208.97 L295.65 208.65 L295.34 208.32 L295.03 207.98 L295.16 207.27 L295.83 206.15 L296.55 205.05 L296.75 204.40 L296.52 204.09 L296.30 203.78 L296.08 203.46 L295.87 203.14 L295.19 203.10 L293.92 203.39 L292.63 203.63 L291.92 203.50 L291.71 203.09 L291.51 202.69 L291.31 202.27 L291.13 201.86 L291.47 201.23 L292.46 200.36 L293.47 199.54 L293.87 198.99 L293.75 198.62 L293.63 198.26 L293.53 197.89 L293.43 197.51 L292.79 197.27 L291.49 197.15 L290.19 196.98 L289.55 196.64 L289.48 196.19 L289.41 195.74 L289.36 195.28 L289.31 194.83 L289.83 194.34 L291.03 193.82 L292.25 193.35 L292.80 192.95 L292.80 192.56 L292.80 192.18 L292.82 191.79 L292.84 191.41 L292.30 190.98 L291.11 190.46 L289.92 189.90 L289.42 189.38 L289.49 188.93 L289.57 188.48 L289.65 188.03 L289.75 187.59 L290.40 187.27 L291.70 187.16 L293.01 187.09 L293.65 186.88 L293.77 186.51 L293.89 186.14 L294.02 185.78 L294.16 185.42 L293.79 184.85 L292.81 183.99 L291.86 183.08 L291.54 182.44 L291.75 182.03 L291.96 181.63 L292.18 181.23 L292.41 180.83 L293.12 180.74 L294.40 181.03 L295.66 181.37 L296.34 181.36 L296.56 181.05 L296.79 180.74 L297.03 180.44 L297.27 180.14 L297.09 179.48 L296.43 178.36 L295.80 177.20 L295.71 176.49 L296.03 176.17 L296.35 175.85 L296.68 175.54 L297.02 175.23 L297.73 175.36 L298.85 176.03 L299.95 176.75 L300.60 176.95 L300.91 176.72 L301.22 176.50 L301.54 176.28 L301.86 176.07 L301.90 175.39 L301.61 174.12 L301.37 172.83 L301.50 172.12 L301.91 171.91 L302.31 171.71 L302.73 171.51 L303.14 171.33 L303.77 171.67 L304.64 172.66 L305.46 173.67 L306.01 174.07 L306.38 173.95 L306.74 173.83 L307.11 173.73 L307.49 173.63 L307.73 172.99 L307.85 171.69 L308.02 170.39 L308.36 169.75 L308.81 169.68 L309.26 169.61 L309.72 169.56 L310.17 169.51 L310.66 170.03 L311.18 171.23 L311.65 172.45 L312.05 173.00 L312.44 173.00 L312.82 173.00 L313.21 173.02 L313.59 173.04 L314.02 172.50 L314.54 171.31 L315.10 170.12 L315.62 169.62 L316.07 169.69 L316.52 169.77 L316.97 169.85 L317.41 169.95 L317.73 170.60 L317.84 171.90 L317.91 173.21 L318.12 173.85 L318.49 173.97 L318.86 174.09 L319.22 174.22 L319.58 174.36 L320.15 173.99 L321.01 173.01 L321.92 172.06 L322.56 171.74 L322.97 171.95 L323.37 172.16 L323.77 172.38 L324.17 172.61 L324.26 173.32 L323.97 174.60 L323.63 175.86 L323.64 176.54 L323.95 176.76 L324.26 176.99 L324.56 177.23 L324.86 177.47 L325.52 177.29 L326.64 176.63 L327.80 176.00 L328.51 175.91 L328.83 176.23 L329.15 176.55 L329.46 176.88 L329.77 177.22 L329.64 177.93 L328.97 179.05 L328.25 180.15 L328.05 180.80 L328.28 181.11 L328.50 181.42 L328.72 181.74 L328.93 182.06 L329.61 182.10 L330.88 181.81 L332.17 181.57 L332.88 181.70 L333.09 182.11 L333.29 182.51 L333.49 182.93 L333.67 183.34 L333.33 183.97 L332.34 184.84 L331.33 185.66 L330.93 186.21 L331.05 186.58 L331.17 186.94 L331.27 187.31 L331.37 187.69 L332.01 187.93 L333.31 188.05 L334.61 188.22 L335.25 188.56 L335.32 189.01 L335.39 189.46 L335.44 189.92 L335.49 190.37 L334.97 190.86 L333.77 191.38 L332.55 191.85 L332.00 192.25 L332.00 192.64 L332.00 193.02 L331.98 193.41 L331.96 193.79 L332.50 194.22 L333.69 194.74Z"/><path d="M298.60 216.80 L299.83 217.25 L300.37 217.73 L300.34 218.19 L300.30 218.65 L300.24 219.11 L300.17 219.56 L299.53 219.91 L298.23 220.07 L296.93 220.16 L296.30 220.37 L296.19 220.72 L296.08 221.06 L295.95 221.40 L295.82 221.74 L296.19 222.30 L297.14 223.18 L298.06 224.12 L298.34 224.78 L298.11 225.18 L297.87 225.58 L297.62 225.97 L297.36 226.35 L296.64 226.38 L295.39 225.97 L294.18 225.48 L293.52 225.40 L293.27 225.66 L293.02 225.92 L292.76 226.17 L292.50 226.42 L292.58 227.08 L293.07 228.29 L293.48 229.54 L293.45 230.26 L293.07 230.52 L292.68 230.77 L292.28 231.01 L291.88 231.24 L291.22 230.96 L290.28 230.04 L289.40 229.09 L288.84 228.72 L288.50 228.85 L288.16 228.98 L287.82 229.09 L287.47 229.20 L287.26 229.83 L287.17 231.13 L287.01 232.43 L286.66 233.07 L286.21 233.14 L285.75 233.20 L285.29 233.24 L284.83 233.27 L284.35 232.73 L283.90 231.50 L283.52 230.25 L283.18 229.68 L282.82 229.65 L282.46 229.62 L282.10 229.57 L281.74 229.52 L281.27 230.00 L280.63 231.13 L279.92 232.23 L279.33 232.66 L278.89 232.52 L278.45 232.37 L278.02 232.22 L277.59 232.04 L277.39 231.35 L277.52 230.04 L277.72 228.76 L277.66 228.09 L277.35 227.91 L277.04 227.72 L276.73 227.53 L276.44 227.32 L275.81 227.55 L274.73 228.29 L273.62 228.98 L272.91 229.10 L272.56 228.79 L272.23 228.47 L271.91 228.14 L271.60 227.79 L271.72 227.08 L272.41 225.97 L273.15 224.89 L273.38 224.26 L273.17 223.97 L272.98 223.66 L272.79 223.35 L272.61 223.04 L271.94 222.98 L270.66 223.18 L269.35 223.31 L268.66 223.11 L268.48 222.68 L268.33 222.25 L268.18 221.81 L268.04 221.37 L268.47 220.78 L269.57 220.07 L270.70 219.43 L271.18 218.96 L271.13 218.60 L271.08 218.24 L271.05 217.88 L271.02 217.52 L270.45 217.18 L269.20 216.80 L267.97 216.35 L267.43 215.87 L267.46 215.41 L267.50 214.95 L267.56 214.49 L267.63 214.04 L268.27 213.69 L269.57 213.53 L270.87 213.44 L271.50 213.23 L271.61 212.88 L271.72 212.54 L271.85 212.20 L271.98 211.86 L271.61 211.30 L270.66 210.42 L269.74 209.48 L269.46 208.82 L269.69 208.42 L269.93 208.02 L270.18 207.63 L270.44 207.25 L271.16 207.22 L272.41 207.63 L273.62 208.12 L274.28 208.20 L274.53 207.94 L274.78 207.68 L275.04 207.43 L275.30 207.18 L275.22 206.52 L274.73 205.31 L274.32 204.06 L274.35 203.34 L274.73 203.08 L275.12 202.83 L275.52 202.59 L275.92 202.36 L276.58 202.64 L277.52 203.56 L278.40 204.51 L278.96 204.88 L279.30 204.75 L279.64 204.62 L279.98 204.51 L280.33 204.40 L280.54 203.77 L280.63 202.47 L280.79 201.17 L281.14 200.53 L281.59 200.46 L282.05 200.40 L282.51 200.36 L282.97 200.33 L283.45 200.87 L283.90 202.10 L284.28 203.35 L284.62 203.92 L284.98 203.95 L285.34 203.98 L285.70 204.03 L286.06 204.08 L286.53 203.60 L287.17 202.47 L287.88 201.37 L288.47 200.94 L288.91 201.08 L289.35 201.23 L289.78 201.38 L290.21 201.56 L290.41 202.25 L290.28 203.56 L290.08 204.84 L290.14 205.51 L290.45 205.69 L290.76 205.88 L291.07 206.07 L291.36 206.28 L291.99 206.05 L293.07 205.31 L294.18 204.62 L294.89 204.50 L295.24 204.81 L295.57 205.13 L295.89 205.46 L296.20 205.81 L296.08 206.52 L295.39 207.63 L294.65 208.71 L294.42 209.34 L294.63 209.63 L294.82 209.94 L295.01 210.25 L295.19 210.56 L295.86 210.62 L297.14 210.42 L298.45 210.29 L299.14 210.49 L299.32 210.92 L299.47 211.35 L299.62 211.79 L299.76 212.23 L299.33 212.82 L298.23 213.53 L297.10 214.17 L296.62 214.64 L296.67 215.00 L296.72 215.36 L296.75 215.72 L296.78 216.08 L297.35 216.42 L298.60 216.80Z"/><path d="M339.90 235.72 L341.01 236.42 L341.45 237.01 L341.32 237.47 L341.18 237.92 L341.03 238.37 L340.86 238.82 L340.17 239.05 L338.85 238.96 L337.56 238.80 L336.88 238.89 L336.70 239.22 L336.52 239.55 L336.32 239.87 L336.11 240.19 L336.36 240.82 L337.11 241.88 L337.82 243.00 L337.95 243.72 L337.63 244.07 L337.31 244.42 L336.98 244.76 L336.63 245.10 L335.91 245.00 L334.76 244.35 L333.66 243.65 L333.02 243.44 L332.71 243.66 L332.40 243.87 L332.09 244.07 L331.77 244.27 L331.71 244.94 L331.93 246.23 L332.08 247.54 L331.89 248.24 L331.45 248.43 L331.00 248.60 L330.56 248.77 L330.10 248.92 L329.49 248.51 L328.74 247.43 L328.06 246.32 L327.57 245.85 L327.20 245.92 L326.82 245.98 L326.45 246.02 L326.08 246.06 L325.73 246.64 L325.37 247.90 L324.94 249.14 L324.46 249.69 L323.98 249.67 L323.51 249.63 L323.03 249.59 L322.56 249.52 L322.19 248.90 L321.98 247.60 L321.84 246.30 L321.61 245.66 L321.24 245.56 L320.88 245.45 L320.53 245.33 L320.18 245.20 L319.61 245.58 L318.74 246.55 L317.81 247.49 L317.14 247.77 L316.72 247.55 L316.31 247.31 L315.90 247.06 L315.50 246.80 L315.44 246.07 L315.82 244.81 L316.26 243.58 L316.32 242.91 L316.03 242.66 L315.76 242.40 L315.49 242.14 L315.23 241.87 L314.56 241.96 L313.35 242.46 L312.11 242.90 L311.38 242.87 L311.10 242.49 L310.83 242.09 L310.57 241.69 L310.33 241.28 L310.58 240.60 L311.47 239.63 L312.40 238.71 L312.75 238.13 L312.60 237.78 L312.46 237.43 L312.34 237.08 L312.22 236.72 L311.57 236.52 L310.27 236.44 L308.96 236.30 L308.31 235.96 L308.23 235.49 L308.16 235.01 L308.10 234.54 L308.06 234.07 L308.58 233.56 L309.80 233.07 L311.04 232.65 L311.61 232.28 L311.62 231.90 L311.65 231.52 L311.69 231.15 L311.74 230.78 L311.25 230.31 L310.10 229.68 L308.99 228.98 L308.55 228.39 L308.68 227.93 L308.82 227.48 L308.97 227.03 L309.14 226.58 L309.83 226.35 L311.15 226.44 L312.44 226.60 L313.12 226.51 L313.30 226.18 L313.48 225.85 L313.68 225.53 L313.89 225.21 L313.64 224.58 L312.89 223.52 L312.18 222.40 L312.05 221.68 L312.37 221.33 L312.69 220.98 L313.02 220.64 L313.37 220.30 L314.09 220.40 L315.24 221.05 L316.34 221.75 L316.98 221.96 L317.29 221.74 L317.60 221.53 L317.91 221.33 L318.23 221.13 L318.29 220.46 L318.07 219.17 L317.92 217.86 L318.11 217.16 L318.55 216.97 L319.00 216.80 L319.44 216.63 L319.90 216.48 L320.51 216.89 L321.26 217.97 L321.94 219.08 L322.43 219.55 L322.80 219.48 L323.18 219.42 L323.55 219.38 L323.92 219.34 L324.27 218.76 L324.63 217.50 L325.06 216.26 L325.54 215.71 L326.02 215.73 L326.49 215.77 L326.97 215.81 L327.44 215.88 L327.81 216.50 L328.02 217.80 L328.16 219.10 L328.39 219.74 L328.76 219.84 L329.12 219.95 L329.47 220.07 L329.82 220.20 L330.39 219.82 L331.26 218.85 L332.19 217.91 L332.86 217.63 L333.28 217.85 L333.69 218.09 L334.10 218.34 L334.50 218.60 L334.56 219.33 L334.18 220.59 L333.74 221.82 L333.68 222.49 L333.97 222.74 L334.24 223.00 L334.51 223.26 L334.77 223.53 L335.44 223.44 L336.65 222.94 L337.89 222.50 L338.62 222.53 L338.90 222.91 L339.17 223.31 L339.43 223.71 L339.67 224.12 L339.42 224.80 L338.53 225.77 L337.60 226.69 L337.25 227.27 L337.40 227.62 L337.54 227.97 L337.66 228.32 L337.78 228.68 L338.43 228.88 L339.73 228.96 L341.04 229.10 L341.69 229.44 L341.77 229.91 L341.84 230.39 L341.90 230.86 L341.94 231.33 L341.42 231.84 L340.20 232.33 L338.96 232.75 L338.39 233.12 L338.38 233.50 L338.35 233.88 L338.31 234.25 L338.26 234.62 L338.75 235.09 L339.90 235.72Z"/></g><g transform="translate(300.6 25) rotate(16.3)"><rect x="-16.8" y="-9.2" width="34.5" height="20.6" rx="3" fill="#0b3c55" fill-opacity=".3"/><rect x="-17.25" y="-10.2" width="34.5" height="20.4" rx="3" fill="#e4cbc3"/><rect x="-17.25" y="-10.2" width="34.5" height="19.5" rx="3" fill="#fce9e1"/></g><g transform="translate(188.8 241.3) rotate(-33.9)"><path d="M3 5.2L152 6.2 164 6.2 164 -3 3 1z" fill="#0b3c55" fill-opacity=".22"/><path d="M0 0L15 -4.600V4.600z" fill="#ead9a6"/><path d="M0 0L4 -1.200V1.200z" fill="#2a2a2a"/><rect x="15" y="-4.600" width="149.500" height="9.200" fill="#f3d53f"/><rect x="15" y="-4.600" width="149.500" height="2.800" fill="#f9ea8c"/><rect x="15" y="2" width="149.500" height="2.600" fill="#d4ae2a"/><rect x="144" y="-4.600" width="1.100" height="9.200" fill="#8a7420"/><rect x="144" y="1" width="1.300" height="3.600" fill="#3a3018"/><rect x="139.500" y="-1.500" width="3.400" height="2.200" fill="#5a4c1c"/><path d="M163 -4.600l2.600 1.400v6.400l-2.600 1.400z" fill="#c9a526"/></g></g><rect x="36" y="118" width="30" height="11" fill="#1a1a1a"/><g stroke="#d9eef4" stroke-opacity=".7" stroke-width="3" stroke-dasharray="4 3"><path d="M98 113h185M98 124h175"/></g></svg>
<div style="left:426.6px;top:62px;width:7.4px;height:316.5px;background:#fefefe"></div>
<div style="left:427.4px;top:124px;width:6.6px;height:192px;background:#d4d4d4"></div>
<div style="left:429px;top:219.0px;width:3.2px;height:0.6px;background:#777"></div>
<div style="left:429px;top:220.1px;width:3.2px;height:0.6px;background:#777"></div>
<div style="left:429px;top:221.2px;width:3.2px;height:0.6px;background:#777"></div>
<svg style="left:428.6px;top:64.6px;" width="4" height="2.6" viewBox="0 0 4 2.6" preserveAspectRatio="none"><path d="M.3 2.300L2 .5 3.700 2.300" fill="none" stroke="#444" stroke-width=".8"/></svg>
<svg style="left:428.6px;top:372.6px;" width="4" height="2.6" viewBox="0 0 4 2.6" preserveAspectRatio="none"><path d="M.3 .4L2 2.200 3.700 .4" fill="none" stroke="#444" stroke-width=".8"/></svg>
<div style="left:85px;top:378.6px;width:342px;height:7px;background:#fdfdfd;border-top:0.5px solid #d9d9d9"></div>
<div style="left:199.5px;top:379px;width:112px;height:6.4px;background:#d2d2d2"></div>
<div style="left:254.0px;top:381px;width:0.6px;height:2.6px;background:#777"></div>
<div style="left:255.1px;top:381px;width:0.6px;height:2.6px;background:#777"></div>
<div style="left:256.2px;top:381px;width:0.6px;height:2.6px;background:#777"></div>
<svg style="left:89px;top:380.4px;" width="2.6" height="4" viewBox="0 0 2.6 4" preserveAspectRatio="none"><path d="M2.200.3L.5 2 2.200 3.700" fill="none" stroke="#444" stroke-width=".8"/></svg>
<svg style="left:420.6px;top:380.4px;" width="2.6" height="4" viewBox="0 0 2.6 4" preserveAspectRatio="none"><path d="M.4.3L2.100 2 .4 3.700" fill="none" stroke="#444" stroke-width=".8"/></svg>
<div style="left:427px;top:378.6px;width:7px;height:7px;background:#f0f0f0"></div>
<div style="left:434px;top:62px;width:4px;height:323.5px;background:#f4f4f4;border-right:0.6px solid #c4c4c4;border-left:0.6px solid #c9c9c9"></div>
<div style="left:434.6px;top:206px;width:2.6px;height:34px;background:#6b6b6b"></div>
<svg style="left:435px;top:221px;" width="2" height="2.4" viewBox="0 0 2 2.4" preserveAspectRatio="none"><path d="M0 0v2.400L1.800 1.200z" fill="#fff"/></svg>
<div style="left:438px;top:62px;width:139px;height:323.5px;background:#f0f0f0"></div>
<div style="left:438px;top:62px;width:139px;height:13.9px;background:#f1f1f1"></div>
<div class="t" style="left:445px;top:65.6px;font-size:5.8px">屬性</div>
<svg style="left:570.4px;top:66.4px;" width="4" height="4" viewBox="0 0 4 4" preserveAspectRatio="none"><path d="M.3.3l3.400 3.400M3.700.3L.3 3.700" stroke="#222" stroke-width=".9"/></svg>
<div style="left:438px;top:75.8px;width:130.6px;height:14px;background:linear-gradient(#e3e3e3,#efefef)"></div>
<div style="left:442px;top:80.8px;width:4.4px;height:4.4px;border:0.45px solid #b4bfce;background:#fdfdfd"></div>
<div style="left:443.2px;top:82.75px;width:2px;height:0.5px;background:#5a6a8a"></div>
<div class="t" style="left:449.2px;top:78.3px;font-size:5.5px">投影片</div>
<div style="left:561px;top:79px;width:5.4px;height:4.6px;border:0.6px solid #5b8fd0;border-top-width:1.4px;background:#e6eefa"></div>
<div style="left:483.8px;top:91.2px;width:74.6px;height:10.6px;background:#fff;border:0.6px solid #ababab"></div>
<div style="left:550.2px;top:92.0px;width:7.4px;height:9.0px;background:#fff;border:0.5px solid #a2a2a2"></div>
<svg style="left:552px;top:95.4px" width="3.800" height="2.400" viewBox="0 0 3.800 2.400"><path d="M.3.300L1.900 2 3.500.300" fill="none" stroke="#333" stroke-width=".8"/></svg>
<div class="t" style="left:486px;top:91.7px;">螢幕 4:3</div>
<div class="t" style="left:438px;top:91.8px;width:41.4px;text-align:right">格式(<u>F</u>) :</div>
<div style="left:483.8px;top:105px;width:74.6px;height:10.6px;background:#fff;border:0.6px solid #ababab"></div>
<div style="left:550.2px;top:105.8px;width:7.4px;height:9.0px;background:#fff;border:0.5px solid #a2a2a2"></div>
<svg style="left:552px;top:109.2px" width="3.800" height="2.400" viewBox="0 0 3.800 2.400"><path d="M.3.300L1.900 2 3.500.300" fill="none" stroke="#333" stroke-width=".8"/></svg>
<div class="t" style="left:486px;top:105.5px;">橫向</div>
<div class="t" style="left:438px;top:105.6px;width:41.4px;text-align:right">方向(<u>A</u>) :</div>
<div style="left:483.8px;top:118.8px;width:74.6px;height:10.6px;background:#fff;border:0.6px solid #ababab"></div>
<div style="left:550.2px;top:119.6px;width:7.4px;height:9.0px;background:#fff;border:0.5px solid #a2a2a2"></div>
<svg style="left:552px;top:123.0px" width="3.800" height="2.400" viewBox="0 0 3.800 2.400"><path d="M.3.300L1.900 2 3.500.300" fill="none" stroke="#333" stroke-width=".8"/></svg>
<div class="t" style="left:486px;top:119.3px;">無</div>
<div class="t" style="left:438px;top:119.3px;width:41.4px;text-align:right">背景(<u>B</u>) :</div>
<div style="left:484.4px;top:131.5px;width:74.2px;height:12.3px;background:linear-gradient(#e6e6e6,#dcdcdc);border:0.6px solid #adadad;opacity:.999;text-align:center;line-height:11.3px;font-size:5.4px;color:#1e1e1e">插入影像(<u>C</u>)</div>
<div style="left:483.8px;top:147.2px;width:74.6px;height:10.6px;background:#fff;border:0.6px solid #ababab"></div>
<div style="left:550.2px;top:148.0px;width:7.4px;height:9.0px;background:#fff;border:0.5px solid #a2a2a2"></div>
<svg style="left:552px;top:151.4px" width="3.800" height="2.400" viewBox="0 0 3.800 2.400"><path d="M.3.300L1.900 2 3.500.300" fill="none" stroke="#333" stroke-width=".8"/></svg>
<div class="t" style="left:486px;top:147.7px;letter-spacing:.2px">Blueprint Plans</div>
<div class="t" style="left:438px;top:147.8px;width:41.4px;text-align:right">投影片母片 :</div>
<svg style="left:484.4px;top:161.29999999999998px" width="5.800" height="5.800" viewBox="0 0 5.800 5.800"><rect x=".3" y=".3" width="5.200" height="5.200" fill="#fff" stroke="#3a3a3a" stroke-width=".55"/><path d="M1.300 2.900L2.500 4.200 4.600 1.400" fill="none" stroke="#111" stroke-width=".85"/></svg>
<div class="t" style="left:492.8px;top:159.39999999999998px;">母片背景(<u>E</u>)</div>
<svg style="left:484.4px;top:171.1px" width="5.800" height="5.800" viewBox="0 0 5.800 5.800"><rect x=".3" y=".3" width="5.200" height="5.200" fill="#fff" stroke="#3a3a3a" stroke-width=".55"/><path d="M1.300 2.900L2.500 4.200 4.600 1.400" fill="none" stroke="#111" stroke-width=".85"/></svg>
<div class="t" style="left:492.8px;top:169.2px;">母片物件(<u>G</u>)</div>
<div style="left:484.4px;top:181px;width:74.2px;height:12.4px;background:linear-gradient(#e6e6e6,#dcdcdc);border:0.6px solid #adadad;opacity:.999;text-align:center;line-height:11.4px;font-size:5.4px;color:#1e1e1e"><span style="display:inline-block;width:7.500px;height:5px;background:linear-gradient(#5b9be0,#2f6fc0);border:0.5px solid #2a5a9a;vertical-align:-0.800px;margin-right:1.200px"></span>母片檢視(<u>H</u>)</div>
<div style="left:438px;top:196.6px;width:130.6px;height:13.4px;background:linear-gradient(#e3e3e3,#efefef)"></div>
<div style="left:442px;top:201.3px;width:4.4px;height:4.4px;border:0.45px solid #b4bfce;background:#fdfdfd"></div>
<div style="left:443.2px;top:203.25px;width:2px;height:0.5px;background:#5a6a8a"></div>
<div class="t" style="left:449.2px;top:198.8px;font-size:5.5px">版面配置</div>
<div style="left:483.4px;top:210.2px;width:42.2px;height:31px;border:0.7px solid #4a4a4a;border-radius:1px;background:#fbfbfb"></div>
<svg style="left:445.7px;top:213.6px" width="29.6" height="22.4" viewBox="0 0 29.6 22.4"><rect x=".3" y=".3" width="29.0" height="21.799999999999997" fill="#f7f7f7" stroke="#c4c4c4" stroke-width=".6"/><rect x="1.500" y="1.500" width="26.6" height="19.4" fill="url(#ltg)" stroke="#e6e6e6" stroke-width=".5"/></svg>
<svg style="left:488.8px;top:213.6px" width="29.6" height="22.4" viewBox="0 0 29.6 22.4"><rect x=".3" y=".3" width="29.0" height="21.799999999999997" fill="#f7f7f7" stroke="#c4c4c4" stroke-width=".6"/><rect x="1.500" y="1.500" width="26.6" height="19.4" fill="url(#ltg)" stroke="#e6e6e6" stroke-width=".5"/><rect x="5.400" y="3.300" width="18.800" height="1.500" fill="#8aaad2"/><rect x="3.400" y="6.600" width="22.800" height="12.600" stroke="#d4d4d4" stroke-width=".6" fill="#f4f4f4" fill-opacity=".7"/><rect x="10" y="12.200" width="9.600" height="1.200" fill="#9cbce0"/></svg>
<svg style="left:531.8px;top:213.6px" width="29.6" height="22.4" viewBox="0 0 29.6 22.4"><rect x=".3" y=".3" width="29.0" height="21.799999999999997" fill="#f7f7f7" stroke="#c4c4c4" stroke-width=".6"/><rect x="1.500" y="1.500" width="26.6" height="19.4" fill="url(#ltg)" stroke="#e6e6e6" stroke-width=".5"/><rect x="5.400" y="3.300" width="18.800" height="1.500" fill="#8aaad2"/><rect x="3.400" y="6.600" width="22.800" height="12.600" stroke="#d4d4d4" stroke-width=".6" fill="#f4f4f4" fill-opacity=".7"/></svg>
<svg style="left:445.7px;top:245px" width="29.6" height="22.4" viewBox="0 0 29.6 22.4"><rect x=".3" y=".3" width="29.0" height="21.799999999999997" fill="#f7f7f7" stroke="#c4c4c4" stroke-width=".6"/><rect x="1.500" y="1.500" width="26.6" height="19.4" fill="url(#ltg)" stroke="#e6e6e6" stroke-width=".5"/><rect x="5.400" y="3.300" width="18.800" height="1.500" fill="#8aaad2"/><rect x="3.400" y="6.600" width="10.800" height="12.600" stroke="#d4d4d4" stroke-width=".6" fill="#f4f4f4" fill-opacity=".7"/><rect x="15.400" y="6.600" width="10.800" height="12.600" stroke="#d4d4d4" stroke-width=".6" fill="#f4f4f4" fill-opacity=".7"/></svg>
<svg style="left:488.8px;top:245px" width="29.6" height="22.4" viewBox="0 0 29.6 22.4"><rect x=".3" y=".3" width="29.0" height="21.799999999999997" fill="#f7f7f7" stroke="#c4c4c4" stroke-width=".6"/><rect x="1.500" y="1.500" width="26.6" height="19.4" fill="url(#ltg)" stroke="#e6e6e6" stroke-width=".5"/><rect x="5.400" y="3.300" width="18.800" height="1.500" fill="#8aaad2"/></svg>
<svg style="left:531.8px;top:245px" width="29.6" height="22.4" viewBox="0 0 29.6 22.4"><rect x=".3" y=".3" width="29.0" height="21.799999999999997" fill="#f7f7f7" stroke="#c4c4c4" stroke-width=".6"/><rect x="1.500" y="1.500" width="26.6" height="19.4" fill="url(#ltg)" stroke="#e6e6e6" stroke-width=".5"/><rect x="7" y="9" width="15.600" height="1.300" fill="#8fb2dc"/><rect x="10" y="12.600" width="9.600" height="1.100" fill="#9cbce0"/></svg>
<svg style="left:445.7px;top:276.5px" width="29.6" height="22.4" viewBox="0 0 29.6 22.4"><rect x=".3" y=".3" width="29.0" height="21.799999999999997" fill="#f7f7f7" stroke="#c4c4c4" stroke-width=".6"/><rect x="1.500" y="1.500" width="26.6" height="19.4" fill="url(#ltg)" stroke="#e6e6e6" stroke-width=".5"/><rect x="5.400" y="3.300" width="18.800" height="1.500" fill="#8aaad2"/><rect x="3.400" y="6.600" width="10.800" height="5.800" stroke="#d4d4d4" stroke-width=".6" fill="#f4f4f4" fill-opacity=".7"/><rect x="3.400" y="13.400" width="10.800" height="5.800" stroke="#d4d4d4" stroke-width=".6" fill="#f4f4f4" fill-opacity=".7"/><rect x="15.400" y="6.600" width="10.800" height="12.600" stroke="#d4d4d4" stroke-width=".6" fill="#f4f4f4" fill-opacity=".7"/></svg>
<svg style="left:488.8px;top:276.5px" width="29.6" height="22.4" viewBox="0 0 29.6 22.4"><rect x=".3" y=".3" width="29.0" height="21.799999999999997" fill="#f7f7f7" stroke="#c4c4c4" stroke-width=".6"/><rect x="1.500" y="1.500" width="26.6" height="19.4" fill="url(#ltg)" stroke="#e6e6e6" stroke-width=".5"/><rect x="5.400" y="3.300" width="18.800" height="1.500" fill="#8aaad2"/><rect x="3.400" y="6.600" width="10.800" height="12.600" stroke="#d4d4d4" stroke-width=".6" fill="#f4f4f4" fill-opacity=".7"/><rect x="15.400" y="6.600" width="10.800" height="5.800" stroke="#d4d4d4" stroke-width=".6" fill="#f4f4f4" fill-opacity=".7"/><rect x="15.400" y="13.400" width="10.800" height="5.800" stroke="#d4d4d4" stroke-width=".6" fill="#f4f4f4" fill-opacity=".7"/></svg>
<svg style="left:531.8px;top:276.5px" width="29.6" height="22.4" viewBox="0 0 29.6 22.4"><rect x=".3" y=".3" width="29.0" height="21.799999999999997" fill="#f7f7f7" stroke="#c4c4c4" stroke-width=".6"/><rect x="1.500" y="1.500" width="26.6" height="19.4" fill="url(#ltg)" stroke="#e6e6e6" stroke-width=".5"/><rect x="5.400" y="3.300" width="18.800" height="1.500" fill="#8aaad2"/><rect x="3.400" y="6.600" width="10.800" height="5.800" stroke="#d4d4d4" stroke-width=".6" fill="#f4f4f4" fill-opacity=".7"/><rect x="15.400" y="6.600" width="10.800" height="5.800" stroke="#d4d4d4" stroke-width=".6" fill="#f4f4f4" fill-opacity=".7"/><rect x="3.400" y="13.400" width="22.800" height="5.800" stroke="#d4d4d4" stroke-width=".6" fill="#f4f4f4" fill-opacity=".7"/></svg>
<svg style="left:445.7px;top:308px" width="29.6" height="22.4" viewBox="0 0 29.6 22.4"><rect x=".3" y=".3" width="29.0" height="21.799999999999997" fill="#f7f7f7" stroke="#c4c4c4" stroke-width=".6"/><rect x="1.500" y="1.500" width="26.6" height="19.4" fill="url(#ltg)" stroke="#e6e6e6" stroke-width=".5"/><rect x="5.400" y="3.300" width="18.800" height="1.500" fill="#8aaad2"/><rect x="3.400" y="6.600" width="22.800" height="5.800" stroke="#d4d4d4" stroke-width=".6" fill="#f4f4f4" fill-opacity=".7"/><rect x="3.400" y="13.400" width="22.800" height="5.800" stroke="#d4d4d4" stroke-width=".6" fill="#f4f4f4" fill-opacity=".7"/></svg>
<svg style="left:488.8px;top:308px" width="29.6" height="22.4" viewBox="0 0 29.6 22.4"><rect x=".3" y=".3" width="29.0" height="21.799999999999997" fill="#f7f7f7" stroke="#c4c4c4" stroke-width=".6"/><rect x="1.500" y="1.500" width="26.6" height="19.4" fill="url(#ltg)" stroke="#e6e6e6" stroke-width=".5"/><rect x="5.400" y="3.300" width="18.800" height="1.500" fill="#8aaad2"/><rect x="3.400" y="6.600" width="10.800" height="5.800" stroke="#d4d4d4" stroke-width=".6" fill="#f4f4f4" fill-opacity=".7"/><rect x="15.400" y="6.600" width="10.800" height="5.800" stroke="#d4d4d4" stroke-width=".6" fill="#f4f4f4" fill-opacity=".7"/><rect x="3.400" y="13.400" width="10.800" height="5.800" stroke="#d4d4d4" stroke-width=".6" fill="#f4f4f4" fill-opacity=".7"/><rect x="15.400" y="13.400" width="10.800" height="5.800" stroke="#d4d4d4" stroke-width=".6" fill="#f4f4f4" fill-opacity=".7"/></svg>
<svg style="left:531.8px;top:308px" width="29.6" height="22.4" viewBox="0 0 29.6 22.4"><rect x=".3" y=".3" width="29.0" height="21.799999999999997" fill="#f7f7f7" stroke="#c4c4c4" stroke-width=".6"/><rect x="1.500" y="1.500" width="26.6" height="19.4" fill="url(#ltg)" stroke="#e6e6e6" stroke-width=".5"/><rect x="5.400" y="3.300" width="18.800" height="1.500" fill="#8aaad2"/><rect x="3.4" y="6.6" width="7" height="5.800" stroke="#d4d4d4" stroke-width=".6" fill="#f4f4f4" fill-opacity=".7"/><rect x="3.4" y="13.4" width="7" height="5.800" stroke="#d4d4d4" stroke-width=".6" fill="#f4f4f4" fill-opacity=".7"/><rect x="11.2" y="6.6" width="7" height="5.800" stroke="#d4d4d4" stroke-width=".6" fill="#f4f4f4" fill-opacity=".7"/><rect x="11.2" y="13.4" width="7" height="5.800" stroke="#d4d4d4" stroke-width=".6" fill="#f4f4f4" fill-opacity=".7"/><rect x="19.0" y="6.6" width="7" height="5.800" stroke="#d4d4d4" stroke-width=".6" fill="#f4f4f4" fill-opacity=".7"/><rect x="19.0" y="13.4" width="7" height="5.800" stroke="#d4d4d4" stroke-width=".6" fill="#f4f4f4" fill-opacity=".7"/></svg>
<svg style="left:445.7px;top:339.5px" width="29.6" height="22.4" viewBox="0 0 29.6 22.4"><rect x=".3" y=".3" width="29.0" height="21.799999999999997" fill="#f7f7f7" stroke="#c4c4c4" stroke-width=".6"/><rect x="1.500" y="1.500" width="26.6" height="19.4" fill="url(#ltg)" stroke="#e6e6e6" stroke-width=".5"/><rect x="24" y="3.400" width="1.500" height="15.600" fill="#8aaad2"/><rect x="3.400" y="3.400" width="18.600" height="15.600" stroke="#d4d4d4" stroke-width=".6" fill="#f4f4f4" fill-opacity=".7"/></svg>
<svg style="left:488.8px;top:339.5px" width="29.6" height="22.4" viewBox="0 0 29.6 22.4"><rect x=".3" y=".3" width="29.0" height="21.799999999999997" fill="#f7f7f7" stroke="#c4c4c4" stroke-width=".6"/><rect x="1.500" y="1.500" width="26.6" height="19.4" fill="url(#ltg)" stroke="#e6e6e6" stroke-width=".5"/><rect x="24" y="3.400" width="1.500" height="15.600" fill="#8aaad2"/><rect x="3.400" y="3.400" width="8.800" height="15.600" stroke="#d4d4d4" stroke-width=".6" fill="#f4f4f4" fill-opacity=".7"/><rect x="13.200" y="3.400" width="8.800" height="15.600" stroke="#d4d4d4" stroke-width=".6" fill="#f4f4f4" fill-opacity=".7"/></svg>
<svg style="left:531.8px;top:339.5px" width="29.6" height="22.4" viewBox="0 0 29.6 22.4"><rect x=".3" y=".3" width="29.0" height="21.799999999999997" fill="#f7f7f7" stroke="#c4c4c4" stroke-width=".6"/><rect x="1.500" y="1.500" width="26.6" height="19.4" fill="url(#ltg)" stroke="#e6e6e6" stroke-width=".5"/><rect x="5.400" y="3.300" width="18.800" height="1.500" fill="#8aaad2"/><rect x="22.400" y="6.400" width="1.500" height="12.600" fill="#8aaad2"/><rect x="3.400" y="6.600" width="17.600" height="12.600" stroke="#d4d4d4" stroke-width=".6" fill="#f4f4f4" fill-opacity=".7"/></svg>
<svg style="left:445.7px;top:368.4px" width="29.6" height="16.1" viewBox="0 0 29.6 16.1"><rect x=".3" y=".3" width="29.0" height="21.799999999999997" fill="#f7f7f7" stroke="#c4c4c4" stroke-width=".6"/><rect x="1.500" y="1.500" width="26.6" height="19.4" fill="url(#ltg)" stroke="#e6e6e6" stroke-width=".5"/><rect x="5.400" y="3.300" width="18.800" height="1.500" fill="#8aaad2"/><rect x="3.400" y="6.600" width="22.800" height="12.600" stroke="#d4d4d4" stroke-width=".6" fill="#f4f4f4" fill-opacity=".7"/></svg>
<div style="left:568.6px;top:77px;width:8px;height:301.6px;background:#fdfdfd;border-left:0.5px solid #dcdcdc"></div>
<div style="left:568.9px;top:85px;width:7.7px;height:281.5px;background:#d4d4d4"></div>
<svg style="left:570.8px;top:79.6px;" width="4" height="2.6" viewBox="0 0 4 2.6" preserveAspectRatio="none"><path d="M.3 2.300L2 .5 3.700 2.300" fill="none" stroke="#444" stroke-width=".8"/></svg>
<svg style="left:570.8px;top:378.4px;" width="4" height="2.6" viewBox="0 0 4 2.6" preserveAspectRatio="none"><path d="M.3 .4L2 2.200 3.700 .4" fill="none" stroke="#444" stroke-width=".8"/></svg>
<div style="left:571.2px;top:222.4px;width:3.2px;height:0.6px;background:#777"></div>
<div style="left:571.2px;top:223.5px;width:3.2px;height:0.6px;background:#777"></div>
<div style="left:571.2px;top:224.6px;width:3.2px;height:0.6px;background:#777"></div>
<div style="left:577px;top:62px;width:19px;height:323.5px;background:#f0f0f0;border-left:0.5px solid #dadada"></div>
<svg style="left:584.6px;top:68px;" width="4.4" height="4.4" viewBox="0 0 4.4 4.4" preserveAspectRatio="none"><rect x="0" y=".2" width="2.400" height="1.800" fill="#555"/><path d="M1.800 2.200l2 2" stroke="#666" stroke-width="1"/></svg>
<div style="left:579.2px;top:81.6px;width:14.4px;height:14.6px;border:0.6px solid #bdbdbd;border-radius:1.400px;background:#f7f7f7"></div>
<svg style="left:581px;top:83.9px" width="11" height="11" viewBox="0 0 12 12"><g stroke="#9c9c9c" stroke-width=".7" fill="#e4e4e4"><circle cx="3.200" cy="3.200" r="2.500"/><circle cx="8.800" cy="8.800" r="2.500"/></g><path d="M3.600 3.600L8.400 8.400" stroke="#9c9c9c" stroke-width="3.200"/><path d="M3.400 3.400L8.600 8.600" stroke="#e4e4e4" stroke-width="1.900"/><path d="M.4 2.600L3 1.800M9.200 10.200l2.400-.8" stroke="#f7f7f7" stroke-width="1.500"/></svg>
<svg style="left:581px;top:100.0px" width="11" height="11" viewBox="0 0 12 12"><rect x="1" y="1.400" width="10" height="9.200" fill="#c9c4d4" stroke="#8c86a0" stroke-width=".7"/><rect x="5" y="2.600" width="5" height="6.800" fill="#7a4a9a"/><rect x="2" y="3" width="2.400" height="1.200" fill="#8c86a0"/><rect x="2" y="5.400" width="2.400" height="1.200" fill="#8c86a0"/></svg>
<svg style="left:581px;top:116.5px" width="11" height="11" viewBox="0 0 12 12"><path d="M6 .4l1.700 3.800 4.100.4-3.100 2.700.9 4.100L6 9.200 2.400 11.400l.9-4.100L.2 4.600l4.100-.4z" fill="#f3df5a" stroke="#c9a92a" stroke-width=".7"/></svg>
<svg style="left:581px;top:132.1px" width="11" height="11" viewBox="0 0 12 12"><rect x=".8" y="1.600" width="10.400" height="8.800" fill="#4f8fcd" stroke="#2f6aa6" stroke-width=".7"/><rect x="2" y="3" width="8" height="1.400" fill="#cfe2f5"/><rect x="2" y="5.600" width="8" height="3.400" fill="#8bb6e2"/></svg>
<svg style="left:581px;top:148.9px" width="11" height="11" viewBox="0 0 12 12"><rect x="1" y="9.400" width="10" height="1.800" fill="#4a9a3a"/><text x="6" y="9.400" font-size="11" font-weight="bold" text-anchor="middle" font-family="Liberation Serif,serif" fill="#3f7f2f">T</text></svg>
<svg style="left:581px;top:165.5px" width="11" height="11" viewBox="0 0 12 12"><rect x=".8" y="2.600" width="10.400" height="7.600" rx="1" fill="#e8a33a" stroke="#a86a1a" stroke-width=".7"/><circle cx="6" cy="6.400" r="2.200" fill="#6a4a1a"/><rect x="4" y="1.400" width="4" height="1.600" fill="#a86a1a"/></svg>
<svg style="left:581px;top:182.1px" width="11" height="11" viewBox="0 0 12 12"><circle cx="6" cy="6" r="4.800" fill="#f3f3f3" stroke="#8a8a8a" stroke-width="1"/><path d="M3.600 3.600l3.400 1.600 1.400 3.200-3.400-1.600z" fill="#c0392b"/></svg>
<div style="left:4px;top:385px;width:592px;height:10.6px;background:#f0f0f0;border-top:0.6px solid #cdcdcd"></div>
<div class="t" style="left:9.3px;top:386.8px;letter-spacing:.2px">投影片 1 / 3</div>
<div class="t" style="left:156.8px;top:386.8px;letter-spacing:.2px">Blueprint Plans</div>
<svg style="left:222px;top:389px;" width="5" height="4" viewBox="0 0 5 4" preserveAspectRatio="none"><path d="M.4 1.200h2.200M1.600 1.200v2.400h3v-2h-2" fill="none" stroke="#5a6f9a" stroke-width=".7"/></svg>
<div class="t" style="left:231.6px;top:386.8px;letter-spacing:.2px">-0.96 / -0.16</div>
<svg style="left:317.5px;top:388.8px;" width="5.5" height="4.6" viewBox="0 0 5.5 4.6" preserveAspectRatio="none"><rect x="1.600" y="1.200" width="3.400" height="3" fill="none" stroke="#666" stroke-width=".6"/><path d="M.4 1.600v2.400M2 .4h2.600" stroke="#444" stroke-width=".6"/></svg>
<div class="t" style="left:327.4px;top:386.8px;letter-spacing:.1px">0.00 x 0.00</div>
<div style="left:413.6px;top:388px;width:6.6px;height:6.4px;border:0.5px solid #b5b5b5;background:#f6f6f6"></div>
<div style="left:415.6px;top:389.8px;width:2.8px;height:2.8px;border:0.5px solid #999"></div>
<div class="t" style="left:450px;top:386.8px;">中文 (正體字)</div>
<svg style="left:497.6px;top:389px;" width="4.8" height="4.8" viewBox="0 0 4.8 4.8" preserveAspectRatio="none"><path d="M2.400 0v4.800M0 2.400h4.800" stroke="#222" stroke-width="1.100"/></svg>
<div style="left:512px;top:391.2px;width:56px;height:0.6px;background:#8a8a8a"></div>
<div style="left:539.5px;top:389.4px;width:1.6px;height:4px;background:#666"></div>
<div class="t" style="left:509px;top:386.8px;font-size:5px">−</div>
<div class="t" style="left:569px;top:386.8px;font-size:5px">+</div>
<div class="t" style="left:578.4px;top:386.8px;letter-spacing:.5px">66%</div>
<div style="left:43.5px;top:387.2px;width:0.5px;height:7.4px;background:#d2d2d2"></div>
<div style="left:153px;top:387.2px;width:0.5px;height:7.4px;background:#d2d2d2"></div>
<div style="left:217px;top:387.2px;width:0.5px;height:7.4px;background:#d2d2d2"></div>
<div style="left:409px;top:387.2px;width:0.5px;height:7.4px;background:#d2d2d2"></div>
<div style="left:424px;top:387.2px;width:0.5px;height:7.4px;background:#d2d2d2"></div>
<div style="left:444px;top:387.2px;width:0.5px;height:7.4px;background:#d2d2d2"></div>
<div style="left:488px;top:387.2px;width:0.5px;height:7.4px;background:#d2d2d2"></div>
<div style="left:507px;top:387.2px;width:0.5px;height:7.4px;background:#d2d2d2"></div>
<div style="left:575px;top:387.2px;width:0.5px;height:7.4px;background:#d2d2d2"></div>
<svg style="left:436px;top:330px" width="164" height="70" viewBox="436 330 164 70">
<g fill="#fff" fill-opacity=".5" stroke="#a4a4a4" stroke-opacity=".75" stroke-width="1.200" font-family="Liberation Sans,Noto Sans CJK TC,sans-serif" font-weight="bold">
<text transform="translate(440.600 377) scale(1.460 1)" x="0" y="0" font-size="55.600" font-weight="normal" stroke-width="1.300">T</text>
<text x="492" y="375" font-size="50" textLength="108" lengthAdjust="spacingAndGlyphs">客邦</text>
</g>
<text transform="translate(440 390.600) scale(1.400 1)" font-size="17.500" fill="#9c9c9c" fill-opacity=".8" stroke="#fff" stroke-opacity=".8" stroke-width="1.300" paint-order="stroke" textLength="113" lengthAdjust="spacingAndGlyphs" font-family="Liberation Sans,Noto Sans CJK TC,sans-serif" font-weight="bold">techbang.com</text>
</svg>
<div style="left:0px;top:395.5px;width:600px;height:4.5px;background:linear-gradient(#155c94,#1a68a4 40%,#1a68a4)"></div>
<div style="left:596px;top:14px;width:4px;height:386px;background:#1a68a4"></div>
<div style="left:0px;top:14px;width:4px;height:386px;background:linear-gradient(90deg,#1f6ba6,#1a68a4)"></div>
</div>
</body></html>
